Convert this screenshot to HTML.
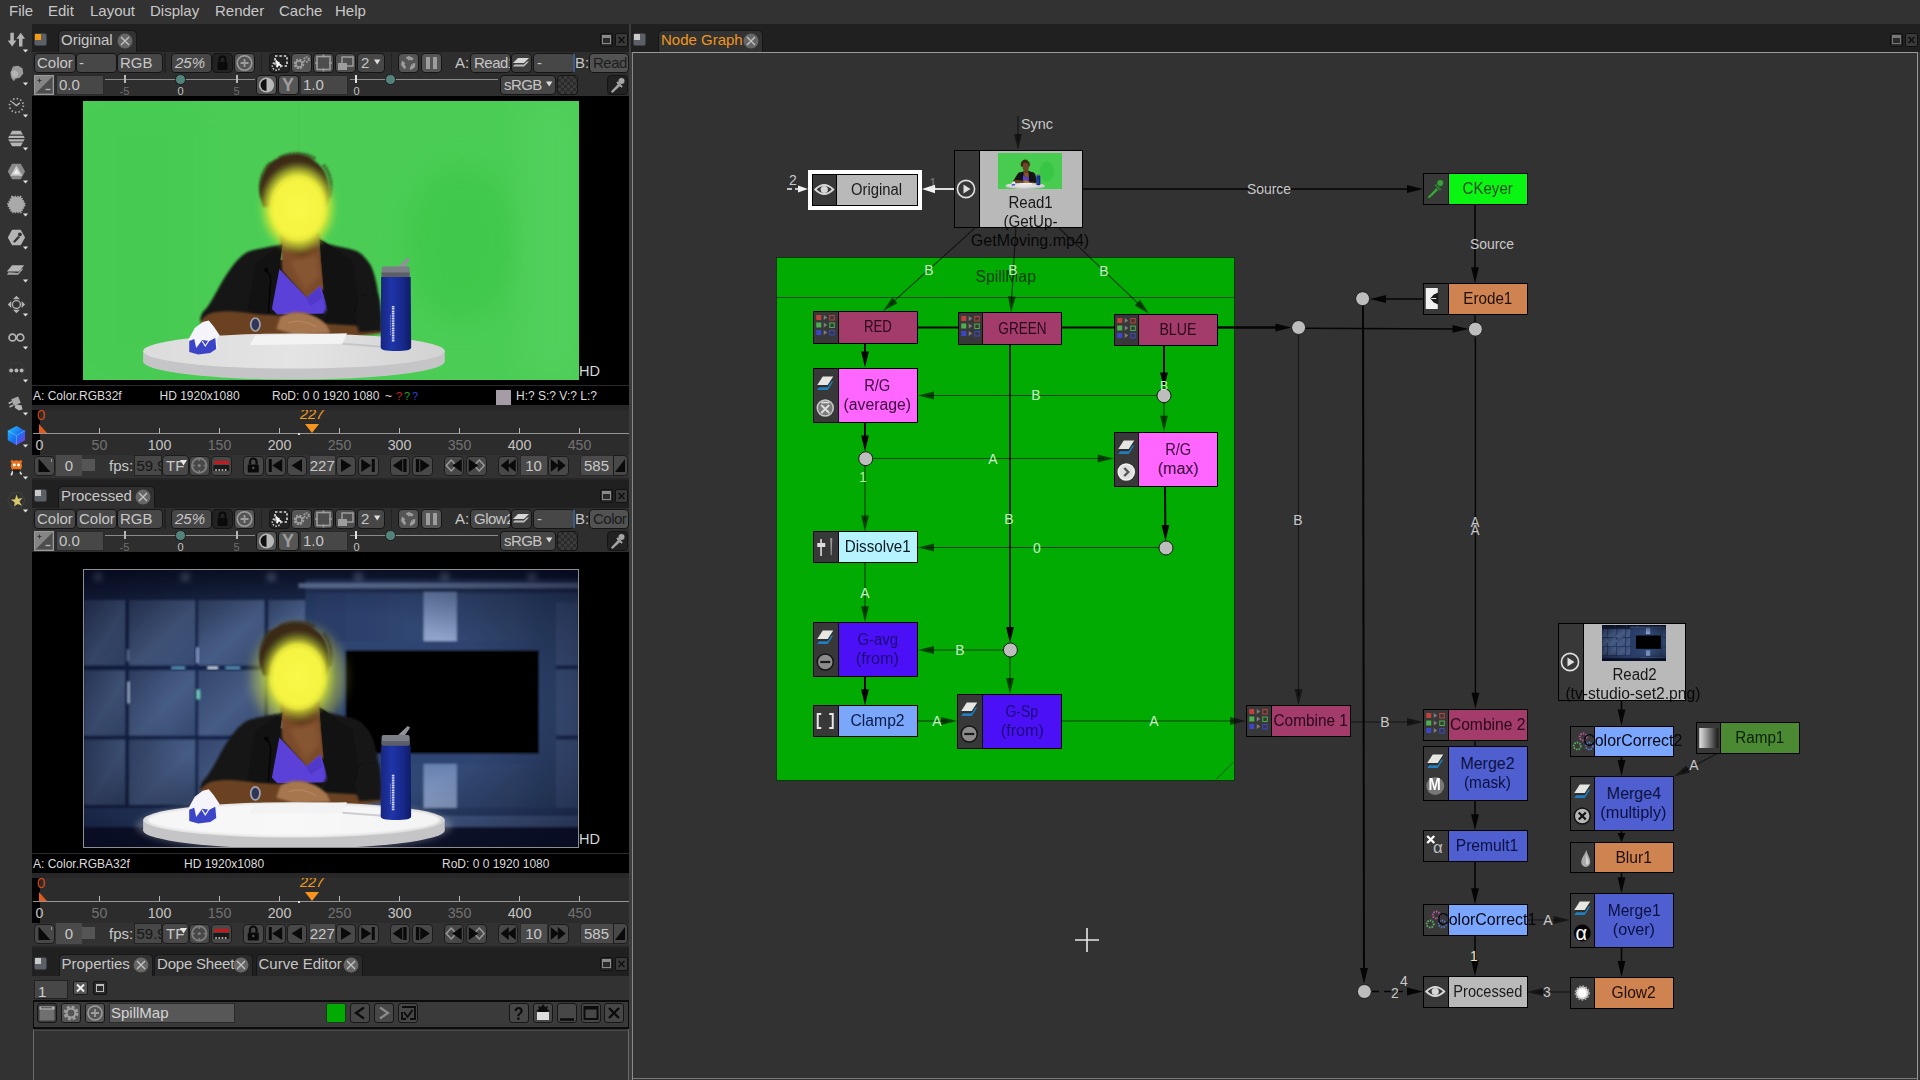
<!DOCTYPE html>
<html><head><meta charset="utf-8"><title>Natron</title>
<style>
*{box-sizing:border-box;margin:0;padding:0}
html,body{width:1920px;height:1080px;overflow:hidden;background:#323232}
body{font-family:"Liberation Sans",sans-serif;font-size:15px;color:#c8c8c8;position:relative;line-height:1}
div,svg,span.a{position:absolute}
.t{white-space:nowrap;line-height:1}
.btn{background:#474747;border:1px solid #151515;border-radius:4px}
.btnd{background:#222;border:1px solid #151515;border-radius:4px}
.spin{background:#474747;border:1px solid #2a2a2a;border-radius:1px}
.nd{border:1px solid #000}
.nt{white-space:nowrap;text-align:center;color:rgba(0,0,0,.86);font-size:15px;line-height:19px}
.lb{white-space:nowrap;color:#c9c9c9;font-size:14px;line-height:1;transform:translate(-50%,-50%)}
</style></head>
<body>
<div style="left:0px;top:0px;width:1920px;height:24px;background:#323232"></div><div class="t" style="left:9px;top:3px;font-size:15px;color:#c8c8c8">File</div><div class="t" style="left:48px;top:3px;font-size:15px;color:#c8c8c8">Edit</div><div class="t" style="left:90px;top:3px;font-size:15px;color:#c8c8c8">Layout</div><div class="t" style="left:150px;top:3px;font-size:15px;color:#c8c8c8">Display</div><div class="t" style="left:215px;top:3px;font-size:15px;color:#c8c8c8">Render</div><div class="t" style="left:279px;top:3px;font-size:15px;color:#c8c8c8">Cache</div><div class="t" style="left:335px;top:3px;font-size:15px;color:#c8c8c8">Help</div><div style="left:0px;top:24px;width:32px;height:1056px;background:#323232"></div><svg style="left:5.5px;top:30.5px;" width="24.3" height="22.5" viewBox="0 0 28 26"><path d="M5 2v9h-3l5 7 5-7h-3v-9z" fill="#b4b4b4"/><path d="M15 18v-9h-3l5-7 5 7h-3v9z" fill="#b4b4b4"/><path d="M19.5 21.5h6l-3 3.2z" fill="#ddd"/></svg><svg style="left:5.5px;top:63.5px;" width="24.3" height="22.5" viewBox="0 0 28 26"><path d="M8 3l6-1 5 3 1 6-4 5-5 1-2 3-3-4-1-6z" fill="#9a9a9a"/><path d="M6 9l4-2 4 3-1 5-5 1z" fill="#b4b4b4"/><path d="M19.5 21.5h6l-3 3.2z" fill="#ddd"/></svg><svg style="left:5.5px;top:95.5px;" width="24.3" height="22.5" viewBox="0 0 28 26"><circle cx="12" cy="11" r="8" fill="none" stroke="#b4b4b4" stroke-width="2" stroke-dasharray="1.6 2.6"/><path d="M7 7l5 4 4-3" fill="none" stroke="#b4b4b4" stroke-width="1.6"/><path d="M19.5 21.5h6l-3 3.2z" fill="#ddd"/></svg><svg style="left:5.5px;top:128.5px;" width="24.3" height="22.5" viewBox="0 0 28 26"><path d="M7 2h10l5 9-5 9h-10l-5-9z" fill="#b4b4b4"/><path d="M2 7h20M2 11h20M2 15h20" stroke="#323232" stroke-width="1.4"/><path d="M19.5 21.5h6l-3 3.2z" fill="#ddd"/></svg><svg style="left:5.5px;top:161.5px;" width="24.3" height="22.5" viewBox="0 0 28 26"><path d="M7 2h10l5 9-5 9h-10l-5-9z" fill="#8a8a8a"/><path d="M12 4l7 12h-14z" fill="#c9c9c9"/><path d="M12 8l3.5 6h-7z" fill="#eee"/><path d="M19.5 21.5h6l-3 3.2z" fill="#ddd"/></svg><svg style="left:5.5px;top:194.5px;" width="24.3" height="22.5" viewBox="0 0 28 26"><path d="M7 2h10l5 9-5 9h-10l-5-9z" fill="#a9a9a9" stroke="#a9a9a9" stroke-width="2.4" stroke-dasharray="1.5 1.5"/><path d="M19.5 21.5h6l-3 3.2z" fill="#ddd"/></svg><svg style="left:5.5px;top:227.5px;" width="24.3" height="22.5" viewBox="0 0 28 26"><path d="M7 2h10l5 9-5 9h-10l-5-9z" fill="#b4b4b4"/><path d="M8 16l6-7 2 2-6 6z" fill="#323232"/><circle cx="16" cy="7.5" r="2.2" fill="#323232"/><path d="M19.5 21.5h6l-3 3.2z" fill="#ddd"/></svg><svg style="left:5.5px;top:260.5px;" width="24.3" height="22.5" viewBox="0 0 28 26"><path d="M7 5h14l-6 7h-14z" fill="#b4b4b4"/><path d="M3 13l-2 3h13l6-7h-2l-4 5z" fill="#a5a5a5"/><path d="M19.5 21.5h6l-3 3.2z" fill="#ddd"/></svg><svg style="left:5.5px;top:294.5px;" width="24.3" height="22.5" viewBox="0 0 28 26"><circle cx="12" cy="11" r="4.6" fill="none" stroke="#b4b4b4" stroke-width="1.5"/><path d="M12 1l4 4h-8zM12 21l4-4h-8zM2 11l4-4v8zM22 11l-4-4v8z" fill="#b4b4b4"/><path d="M19.5 21.5h6l-3 3.2z" fill="#ddd"/></svg><svg style="left:5.5px;top:327.5px;" width="24.3" height="22.5" viewBox="0 0 28 26"><circle cx="7.5" cy="11" r="4" fill="none" stroke="#b4b4b4" stroke-width="2"/><circle cx="16.5" cy="11" r="4" fill="none" stroke="#b4b4b4" stroke-width="2"/><path d="M19.5 21.5h6l-3 3.2z" fill="#ddd"/></svg><svg style="left:5.5px;top:360.5px;" width="24.3" height="22.5" viewBox="0 0 28 26"><path d="M7 2h10l5 9-5 9h-10l-5-9z" fill="none" stroke="#3d3d3d" stroke-width="1"/><circle cx="6" cy="11" r="2.3" fill="#b4b4b4"/><circle cx="12" cy="11" r="2.3" fill="#b4b4b4"/><circle cx="18" cy="11" r="2.3" fill="#b4b4b4"/><path d="M19.5 21.5h6l-3 3.2z" fill="#ddd"/></svg><svg style="left:5.5px;top:393.5px;" width="24.3" height="22.5" viewBox="0 0 28 26"><path d="M6 6l8-3 3 7-8 4z" fill="#a8a8a8"/><path d="M11 12l7 1 1 5-4 1-5-3z" fill="#b4b4b4"/><path d="M3 11l4-2M4 15l4-2" stroke="#b4b4b4" stroke-width="1.8"/><path d="M19.5 21.5h6l-3 3.2z" fill="#ddd"/></svg><svg style="left:5.5px;top:425.5px;" width="24.3" height="22.5" viewBox="0 0 28 26"><defs><linearGradient id="cb" x1="0" y1="0" x2="1" y2="1"><stop offset="0" stop-color="#21c6ff"/><stop offset=".55" stop-color="#1b6cf0"/><stop offset="1" stop-color="#8a35e8"/></linearGradient></defs><path d="M12 0l10 5.5v11l-10 5.5-10-5.5v-11z" fill="url(#cb)"/><path d="M12 11l10-5.5M12 11v11M12 11l-10-5.5" stroke="#7fd8ff" stroke-width=".8" opacity=".7"/><path d="M19.5 21.5h6l-3 3.2z" fill="#ddd"/></svg><svg style="left:5.5px;top:457.5px;" width="24.3" height="22.5" viewBox="0 0 28 26"><circle cx="12" cy="9" r="6.5" fill="#e8731c"/><path d="M6 3l3 3M18 3l-3 3" stroke="#e8731c" stroke-width="3"/><circle cx="9.5" cy="8" r="1.7" fill="#fff"/><circle cx="14.5" cy="8" r="1.7" fill="#fff"/><path d="M8 15l-2 5M15 15l3 4" stroke="#ddd" stroke-width="2"/><rect x="8" y="13" width="8" height="4" fill="#222"/><path d="M19.5 21.5h6l-3 3.2z" fill="#ddd"/></svg><svg style="left:5.5px;top:490.5px;" width="24.3" height="22.5" viewBox="0 0 28 26"><path d="M7 2h10l5 9-5 9h-10l-5-9z" fill="none" stroke="#444" stroke-width="1"/><path d="M12 4l2 5 5-1-3.5 4 3 5-5-2-4 3 .5-5-4.5-3 5-.5z" fill="#d8c86a"/><path d="M19.5 21.5h6l-3 3.2z" fill="#ddd"/></svg><div style="left:32px;top:24px;width:598px;height:1056px;background:#323232"></div><div style="left:32px;top:24px;width:598px;height:28px;background:#202020"></div><svg style="left:34px;top:33px;" width="14" height="14" viewBox="0 0 14 14"><rect x="0" y="0" width="13" height="13" rx="2" fill="#5b6066" stroke="#222" stroke-width="1"/><rect x="1" y="1" width="6" height="6" fill="#f79a10"/></svg><div style="left:58px;top:30px;width:78.5px;height:22px;background:#323232;border:1px solid #161616;border-bottom:none;border-radius:5px 5px 0 0"></div><div class="t" style="left:61px;top:32px;font-size:15px;color:#c8c8c8">Original</div><svg style="left:116.5px;top:33px;" width="16" height="16" viewBox="0 0 16 16"><circle cx="8" cy="8" r="7.5" fill="#666"/><path d="M4 4l8 8M12 4l-8 8" stroke="#c4c4c4" stroke-width="1.25"/></svg><div style="left:600px;top:33px;width:13px;height:14px;background:#2a2a2a;border:1px solid #111;border-radius:2px"><div style="left:1px;top:1px;width:9px;height:9px;border:1.5px solid #8a8a8a;border-top-width:3px"></div></div><div style="left:615px;top:33px;width:13px;height:14px;background:#3a3a3a;border:1px solid #111;border-radius:2px"></div><svg style="left:615px;top:33px;" width="13" height="14" viewBox="0 0 13 14"><path d="M3.5 4l6 6M9.5 4l-6 6" stroke="#111" stroke-width="1.7"/></svg><div style="left:32px;top:52px;width:598px;height:44px;background:#2e2e2e"></div><div class="btn" style="left:34px;top:53px;width:42px;height:20px;"></div><div class="t" style="left:37px;top:55px;font-size:15px;color:#c6c6c6">Color</div><div class="btn" style="left:76px;top:53px;width:41px;height:20px;"></div><div class="t" style="left:79px;top:55px;font-size:15px;color:#c6c6c6">-</div><div class="btn" style="left:117px;top:53px;width:46px;height:20px;"></div><div class="t" style="left:120px;top:55px;font-size:15px;color:#c6c6c6">RGB</div><div style="left:164px;top:53px;width:2px;height:20px;background:#222"></div><div class="btn" style="left:171px;top:53px;width:41px;height:20px;"></div><div class="t" style="left:175px;top:55px;font-size:15px;color:#c6c6c6;font-style:italic">25%</div><div class="btnd" style="left:212px;top:53px;width:21px;height:20px;"></div><svg style="left:212px;top:53px;" width="20" height="20" viewBox="0 0 20 20"><rect x="5.5" y="9" width="10" height="8" rx="1" fill="#0a0a0a"/><path d="M7.5 9v-2.5a3 3 0 0 1 6 0v2.5" fill="none" stroke="#0a0a0a" stroke-width="2"/></svg><div class="btn" style="left:234px;top:53px;width:21px;height:20px;background:#555"></div><svg style="left:234px;top:53px;" width="20" height="20" viewBox="0 0 20 20"><circle cx="10.5" cy="10" r="7.3" fill="none" stroke="#9d9d9d" stroke-width="1.6"/><path d="M6.5 10h8M10.5 6v8" stroke="#9d9d9d" stroke-width="1.8"/></svg><div style="left:261px;top:53px;width:1px;height:20px;background:#222"></div><div class="btnd" style="left:269px;top:53px;width:21px;height:20px;"></div><svg style="left:269px;top:53px;" width="20" height="20" viewBox="0 0 20 20"><rect x="6" y="3" width="12" height="10" fill="none" stroke="#ddd" stroke-width="1.6" stroke-dasharray="2.4 2"/><circle cx="7.5" cy="13" r="4.2" fill="none" stroke="#ccc" stroke-width="1.4" stroke-dasharray="1.6 1.4"/><path d="M6.5 6l6 6.5-3 .3-1.5 2.5z" fill="#fff"/></svg><div class="btn" style="left:291px;top:53px;width:21px;height:20px;background:#555"></div><svg style="left:291px;top:53px;" width="20" height="20" viewBox="0 0 20 20"><circle cx="8" cy="11" r="4" fill="none" stroke="#9d9d9d" stroke-width="2.6" stroke-dasharray="2 1.1"/><circle cx="8" cy="11" r="3" fill="none" stroke="#9d9d9d" stroke-width="1.4"/><circle cx="15.5" cy="6.5" r="2.3" fill="none" stroke="#9d9d9d" stroke-width="2" stroke-dasharray="1.4 .9"/></svg><div class="btn" style="left:313px;top:53px;width:21px;height:20px;background:#4d4d4d"></div><svg style="left:313px;top:53px;" width="20" height="20" viewBox="0 0 20 20"><rect x="4" y="3.5" width="13" height="13" fill="none" stroke="#9d9d9d" stroke-width="1.6"/><path d="M10.5 1.5v3M10.5 15.5v3M2 10h3M16 10h3" stroke="#9d9d9d" stroke-width="1.6"/></svg><div class="btn" style="left:335px;top:53px;width:21px;height:20px;background:#4d4d4d"></div><svg style="left:335px;top:53px;" width="20" height="20" viewBox="0 0 20 20"><rect x="7" y="4" width="11" height="9" fill="none" stroke="#9d9d9d" stroke-width="1.5"/><rect x="3" y="10" width="9" height="7" fill="#9d9d9d"/></svg><div class="btn" style="left:357px;top:53px;width:28px;height:20px;"></div><div class="t" style="left:361px;top:55px;font-size:15px;color:#c6c6c6">2</div><svg style="left:372px;top:53px;" width="10" height="20" viewBox="0 0 10 20"><path d="M2 6.5h6.4l-3.2 5z" fill="#dedede"/></svg><div style="left:391px;top:53px;width:1px;height:20px;background:#222"></div><div class="btn" style="left:398px;top:53px;width:21px;height:20px;background:#555"></div><svg style="left:398px;top:53px;" width="20" height="20" viewBox="0 0 20 20"><path d="M10.5 2.5l4 3.5-4.5 1.5zM3 13l1-5.5 3.5 3zM17.5 14l-5.5 1.5 1.5-4.5z" fill="#9d9d9d"/><circle cx="10.5" cy="10.3" r="5.6" fill="none" stroke="#9d9d9d" stroke-width="2.6" stroke-dasharray="7 4.7"/></svg><div class="btn" style="left:421px;top:53px;width:21px;height:20px;background:#555"></div><svg style="left:421px;top:53px;" width="20" height="20" viewBox="0 0 20 20"><rect x="5" y="4" width="4" height="12" fill="#9d9d9d"/><rect x="12" y="4" width="4" height="12" fill="#9d9d9d"/></svg><div class="t" style="left:455px;top:55px;font-size:15px;color:#c6c6c6">A:</div><div class="btn" style="left:470px;top:53px;width:41px;height:20px;"></div><div style="left:471px;top:54px;width:39px;height:18px;overflow:hidden"><div class="t" style="left:3px;top:1px;font-size:15px;color:#c6c6c6;letter-spacing:-.5px">Read1</div></div><div class="btn" style="left:511px;top:53px;width:21px;height:20px;background:#3d3d3d"></div><svg style="left:511px;top:53px;" width="20" height="20" viewBox="0 0 20 20"><path d="M7 5h11l-5 5h-11z" fill="#d6d6d6"/><path d="M3.5 11.5l-1.5 2h11l5-5h-2l-3.2 3z" fill="#bdbdbd"/></svg><div class="btn" style="left:533px;top:53px;width:42px;height:20px;"></div><div class="t" style="left:537px;top:55px;font-size:15px;color:#c6c6c6">-</div><div style="left:573px;top:54px;width:2px;height:18px;background:#3b5a86"></div><div class="t" style="left:575px;top:55px;font-size:15px;color:#c6c6c6">B:</div><div class="btn" style="left:589px;top:53px;width:40px;height:20px;background:#525252"></div><div style="left:590px;top:54px;width:38px;height:18px;overflow:hidden"><div class="t" style="left:3px;top:1px;font-size:15px;color:#1c1c1c;letter-spacing:-.5px">Read1</div></div><div style="left:34px;top:75px;width:20px;height:20px;background:#858585;border:1px solid #9a9a9a"></div><svg style="left:34px;top:75px;" width="20" height="20" viewBox="0 0 20 20"><path d="M1.5 18.5L18.5 1.5v17z" fill="#4d4d4d"/><path d="M3.5 5.5h4M5.5 3.5v4" stroke="#3a3a3a" stroke-width="1.2"/><path d="M11.5 14.5h5" stroke="#b5b5b5" stroke-width="1.4"/></svg><div class="spin" style="left:56px;top:75px;width:48px;height:20px;"></div><div class="t" style="left:59px;top:77px;font-size:15px;color:#c6c6c6">0.0</div><div style="left:105px;top:79px;width:150px;height:1px;background:#8a8a8a"></div><div style="left:124px;top:75px;width:1.5px;height:8px;background:#b5b5b5"></div><div class="t" style="left:114px;top:85.5px;font-size:11px;color:#6e6e6e;width:21px;text-align:center">-5</div><div style="left:180px;top:75px;width:1.5px;height:8px;background:#b5b5b5"></div><div class="t" style="left:170px;top:85.5px;font-size:11px;color:#c4c4c4;width:21px;text-align:center">0</div><div style="left:236px;top:75px;width:1.5px;height:8px;background:#b5b5b5"></div><div class="t" style="left:226px;top:85.5px;font-size:11px;color:#6e6e6e;width:21px;text-align:center">5</div><div style="left:175px;top:74px;width:10.5px;height:10.5px;background:#54817a;border-radius:50%;border:1px solid #16211f"></div><div class="btn" style="left:256px;top:75px;width:21px;height:20px;background:#555"></div><svg style="left:256px;top:75px;" width="20" height="20" viewBox="0 0 20 20"><circle cx="10.5" cy="10" r="7.6" fill="#b9b9b9"/><path d="M10.5 4a6 6 0 0 0 0 12z" fill="#111"/></svg><div class="btn" style="left:278px;top:75px;width:21px;height:20px;background:#555"></div><div class="t" style="left:282px;top:76px;font-size:18px;font-weight:bold;color:#9d9d9d">Y</div><div class="spin" style="left:300px;top:75px;width:48px;height:20px;"></div><div class="t" style="left:303px;top:77px;font-size:15px;color:#c6c6c6">1.0</div><div style="left:350px;top:79px;width:148px;height:1px;background:#8a8a8a"></div><div style="left:355px;top:75px;width:2px;height:8px;background:#e0e0e0"></div><div class="t" style="left:346px;top:85.5px;font-size:11px;color:#c4c4c4;width:21px;text-align:center">0</div><div style="left:385px;top:74px;width:10.5px;height:10.5px;background:#54817a;border-radius:50%;border:1px solid #16211f"></div><div class="btn" style="left:500px;top:75px;width:56px;height:20px;"></div><div class="t" style="left:504px;top:77px;font-size:15px;color:#c6c6c6;letter-spacing:-.6px">sRGB</div><svg style="left:544px;top:75px;" width="10" height="20" viewBox="0 0 10 20"><path d="M2 6.5h6.4l-3.2 5z" fill="#dedede"/></svg><div style="left:557px;top:75px;width:21px;height:20px;border:1px solid #151515;border-radius:4px;background-color:#3c3c3c;background-image:linear-gradient(45deg,#2b2b2b 25%,transparent 25%,transparent 75%,#2b2b2b 75%),linear-gradient(45deg,#2b2b2b 25%,transparent 25%,transparent 75%,#2b2b2b 75%);background-size:6px 6px;background-position:0 0,3px 3px"></div><div class="btnd" style="left:607px;top:75px;width:21px;height:20px;"></div><svg style="left:607px;top:75px;" width="20" height="20" viewBox="0 0 20 20"><path d="M4 16.5l7-7.5 2 2-7.5 7z" fill="#a6a6a6"/><path d="M10 7l5 5" stroke="#a6a6a6" stroke-width="2"/><circle cx="14.5" cy="6" r="3" fill="#a6a6a6"/></svg><div style="left:32px;top:96px;width:598px;height:290px;background:#000"></div><svg preserveAspectRatio="none" style="left:83px;top:101px;" width="496" height="279" viewBox="0 0 495 279">
<defs>
<filter id="b1" x="-20%" y="-20%" width="140%" height="140%"><feGaussianBlur stdDeviation="1"/></filter>
<filter id="b2" x="-30%" y="-30%" width="160%" height="160%"><feGaussianBlur stdDeviation="2.2"/></filter>
<filter id="b5" x="-40%" y="-40%" width="180%" height="180%"><feGaussianBlur stdDeviation="5"/></filter>
<filter id="b12" x="-50%" y="-50%" width="200%" height="200%"><feGaussianBlur stdDeviation="14"/></filter>
<radialGradient id="yel" cx=".5" cy=".5" r=".5"><stop offset="0" stop-color="#f9f748"/><stop offset=".58" stop-color="#f6f442"/><stop offset=".68" stop-color="#eef03c" stop-opacity=".92"/><stop offset=".8" stop-color="#d4e636" stop-opacity=".5"/><stop offset=".92" stop-color="#b4de3a" stop-opacity=".15"/><stop offset="1" stop-color="#a0d840" stop-opacity="0"/></radialGradient>
<linearGradient id="tab" x1="0" y1="0" x2="1" y2="0"><stop offset="0" stop-color="#dcdcdc"/><stop offset=".5" stop-color="#e4e4e4"/><stop offset="1" stop-color="#d2d2d2"/></linearGradient>
<linearGradient id="bot" x1="0" y1="0" x2="1" y2="0"><stop offset="0" stop-color="#17267f"/><stop offset=".35" stop-color="#1f34a8"/><stop offset=".7" stop-color="#182a8e"/><stop offset="1" stop-color="#101c66"/></linearGradient>
<g id="pbody">
  <!-- hair -->
  <path d="M178 100c-3-10-2-20 3-29 3-7 8-12 14-14 5-3 12-4 18-4 7 0 13 2 18 7 6 4 10 9 12 16 3 8 3 17 2 24l-3 6h-62z" fill="#3a2b16" filter="url(#b1)"/>
  <path d="M179 96c-4-12-1-26 8-34M246 96c3-12 1-24-6-32M196 57c10-6 26-6 36 1" stroke="#3a2b16" stroke-width="3" fill="none" stroke-dasharray="2 1.5" filter="url(#b1)"/>
  <path d="M186 160l60-6 10 70-74 4z" fill="#151515"/>
  <!-- neck + chest skin -->
  <path d="M197 132h39l1 12 6 42-18 14-26-30-2-26z" fill="#7a4c2b" filter="url(#b1)"/>
  <path d="M206 160l16 30 14-16-3-20z" fill="#8c5a36" opacity=".7" filter="url(#b2)"/>
  <path d="M204 150l14 6 16-8-2-12h-26z" fill="#593619" opacity=".7" filter="url(#b2)"/>
  <!-- shirt -->
  <path d="M194 166l29 30.5 14-12 9 28-52 1-8-8z" fill="#5b41d8"/>
  <path d="M223 197l13-10 3 10-12 8z" fill="#4a32c0" opacity=".6"/>
  <!-- cardigan -->
  <path d="M199 143c-12 3-24 4.5-32.5 7-7 3-12 8-16.5 14-7 9-12 18-16 25.5-5 9-10 18-14 21-2 3-3 6-3 9l20 6 50-14 5-44z" fill="#171717" filter="url(#b1)"/>
  <path d="M236 137.5c4 3 7 4.5 9 5.5 10 3 20 4 28 7 6 3 10 8 14 14 5 10 7 24 9 37 1 8 1.5 16 1 23l-14 8-48-10 8-14-4-38z" fill="#171717" filter="url(#b1)"/>
  <path d="M199 143l-3 25-8 42 4 8-30 4 10-60z" fill="#121212"/>
  <path d="M236 138l4 48 5 26-6 8 40 6-10-66z" fill="#121212"/>
  <!-- mic -->
  <path d="M183 170c4 3 5 8 4 14l-2 28" stroke="#050505" stroke-width="1.5" fill="none"/>
  <circle cx="183" cy="169" r="2.2" fill="#050505"/>
  <!-- arms -->
  <path d="M117 222c2-6 8-10 16-11 12-2 26 0 40 2l30 2c6-3 14-4 20-2l14 6 4 4 40 2 16-1 2 8-40 6h-90l-50-4z" fill="#6a4224" filter="url(#b1)"/>
  <path d="M197 216c6-4 16-6 24-4 8 2 16 6 22 12l4 8-34 2-20-6z" fill="#a67650" filter="url(#b1)"/>
  <path d="M276 196l18-2c2 10 3.5 22 3.5 36l-22 1.5c-4-10-4-24 .5-35.5z" fill="#171717" filter="url(#b1)"/>
  <path d="M205 222c8-3 18-2 28 4" stroke="#b88660" stroke-width="1.5" fill="none" opacity=".8"/>
  <!-- watch -->
  <ellipse cx="172" cy="223.5" rx="4.6" ry="6.5" fill="#2f3658" stroke="#a2a3b0" stroke-width="1.7"/>
</g>
<g id="ptable">
  <ellipse cx="210.5" cy="260.5" rx="150.5" ry="18" fill="#c5c5c8"/>
  <rect x="60" y="250" width="301" height="10.5" fill="#c5c5c8"/>
  <ellipse cx="210.5" cy="250" rx="150.5" ry="17.6" fill="url(#tab)"/>
</g>
<g id="pobj">
  <path d="M172 234.5l91.5-2.2-4.5 10.5-92.5 1.2z" fill="#f3f3f3"/>
  <path d="M259 242.8l40 3" stroke="#bdbdc2" stroke-width="2" opacity=".7"/>
  <!-- bottle -->
  <path d="M314 166l10-9.5 2.5 1.5-6 9z" fill="#8f9299"/>
  <rect x="298" y="165.5" width="28" height="10.5" rx="2" fill="#7b7e86"/>
  <rect x="298" y="171.5" width="28" height="4.5" fill="#5c5f68"/>
  <path d="M297.5 176h29.5l.5 70.5c0 2.5-5 3.5-15.2 3.5s-15.2-1-15.2-3.5z" fill="url(#bot)"/>
  <path d="M309.5 205v36" stroke="#e6e9fa" stroke-width="2.6" stroke-dasharray="1.2 .5" opacity=".9"/>
  <path d="M306.8 214v20" stroke="#e6e9fa" stroke-width=".8" stroke-dasharray=".8 .8" opacity=".7"/>
  <!-- toy -->
  <path d="M106 251l-.5-13 6-11 8-6 6-1.5 5 6 6 9-3 4 1 9-6 4-12 1.5z" fill="#f4f4fa"/>
  <path d="M106 251l0-11 5-2 2 9 6-8 7 1 6-3 1 11-6 4-12 1.5z" fill="#3b44c6"/>
  <path d="M119 240l3 5 4-6" stroke="#f4f4fa" stroke-width="1.2" fill="none"/>
</g>
</defs>
<rect width="495" height="279" fill="#4bcd55"/>
<ellipse cx="378" cy="142" rx="55" ry="78" fill="#38c644" filter="url(#b12)" opacity=".6"/>
<rect x="0" y="0" width="120" height="279" fill="#45c94f" filter="url(#b12)" opacity=".55"/><rect x="440" y="0" width="55" height="279" fill="#55d160" filter="url(#b12)" opacity=".7"/>
<rect x="215" y="0" width="1" height="55" fill="#3faf4c" opacity=".3"/>
<use href="#pbody"/><use href="#ptable"/><use href="#pobj"/>
<ellipse cx="214.5" cy="107" rx="35" ry="41" fill="#dcec3c" opacity=".4" filter="url(#b5)"/>
<ellipse cx="214.5" cy="107" rx="40" ry="47" fill="url(#yel)"/>
</svg><div class="t" style="left:579px;top:364px;font-size:14.5px;color:#d6d6d6">HD</div><div style="left:32px;top:386px;width:598px;height:19px;background:#000"></div><div style="left:32px;top:385px;width:598px;height:1px;background:#2b2b2b"></div><div class="t" style="left:33px;top:390px;font-size:12px;color:#dcdcdc;">A: Color.RGB32f</div><div class="t" style="left:159.5px;top:390px;font-size:12px;color:#dcdcdc;">HD 1920x1080</div><div class="t" style="left:272px;top:390px;font-size:12px;color:#dcdcdc;">RoD: 0 0 1920 1080</div><div class="t" style="left:385px;top:390px;font-size:12px;color:#dcdcdc;">~</div><div class="t" style="left:396px;top:390px;font-size:12px;color:#dcdcdc;color:#c82020;font-size:11px;top:391px">?</div><div class="t" style="left:404px;top:390px;font-size:12px;color:#dcdcdc;color:#20a020;font-size:11px;top:391px">?</div><div class="t" style="left:412px;top:390px;font-size:12px;color:#dcdcdc;color:#3040d0;font-size:11px;top:391px">?</div><div class="t" style="left:516px;top:390px;font-size:12px;color:#dcdcdc;">H:? S:? V:? L:?</div><div style="left:496px;top:390px;width:15px;height:15px;background:#a59ca8"></div><div style="left:32px;top:405px;width:598px;height:50px;background:#2c2c2c"></div><div style="left:32px;top:410px;width:7.5px;height:45px;background:#000"></div><div style="left:33px;top:433px;width:596px;height:1px;background:#959595"></div><div style="left:39.0px;top:428px;width:1.2px;height:5px;background:#b5b5b5"></div><div class="t" style="left:14.5px;top:438px;font-size:14.2px;color:#c4c4c4;width:50px;text-align:center">0</div><div style="left:99.0px;top:428px;width:1.2px;height:5px;background:#b5b5b5"></div><div class="t" style="left:74.5px;top:438px;font-size:14.2px;color:#727272;width:50px;text-align:center">50</div><div style="left:159.0px;top:428px;width:1.2px;height:5px;background:#b5b5b5"></div><div class="t" style="left:134.5px;top:438px;font-size:14.2px;color:#c4c4c4;width:50px;text-align:center">100</div><div style="left:219.0px;top:428px;width:1.2px;height:5px;background:#b5b5b5"></div><div class="t" style="left:194.5px;top:438px;font-size:14.2px;color:#727272;width:50px;text-align:center">150</div><div style="left:279.0px;top:428px;width:1.2px;height:5px;background:#b5b5b5"></div><div class="t" style="left:254.5px;top:438px;font-size:14.2px;color:#c4c4c4;width:50px;text-align:center">200</div><div style="left:339.0px;top:428px;width:1.2px;height:5px;background:#b5b5b5"></div><div class="t" style="left:314.5px;top:438px;font-size:14.2px;color:#727272;width:50px;text-align:center">250</div><div style="left:399.0px;top:428px;width:1.2px;height:5px;background:#b5b5b5"></div><div class="t" style="left:374.5px;top:438px;font-size:14.2px;color:#c4c4c4;width:50px;text-align:center">300</div><div style="left:459.0px;top:428px;width:1.2px;height:5px;background:#b5b5b5"></div><div class="t" style="left:434.5px;top:438px;font-size:14.2px;color:#727272;width:50px;text-align:center">350</div><div style="left:519.0px;top:428px;width:1.2px;height:5px;background:#b5b5b5"></div><div class="t" style="left:494.5px;top:438px;font-size:14.2px;color:#c4c4c4;width:50px;text-align:center">400</div><div style="left:579.0px;top:428px;width:1.2px;height:5px;background:#b5b5b5"></div><div class="t" style="left:554.5px;top:438px;font-size:14.2px;color:#727272;width:50px;text-align:center">450</div><div class="t" style="left:37px;top:406.5px;font-size:15px;color:#d24a16">0</div><svg style="left:39px;top:424px;" width="9" height="9" viewBox="0 0 9 9"><path d="M0 0v9h8z" fill="#e5591a"/></svg><div class="t" style="left:297px;top:406.5px;font-size:14.5px;color:#f59b1e;font-style:italic;width:30px;text-align:center">227</div><svg style="left:305px;top:424px;" width="14" height="9" viewBox="0 0 14 9"><path d="M0 0h14l-7 9z" fill="#f7941d"/></svg><div style="left:298px;top:433px;width:2px;height:2px;background:#ddd"></div><div style="left:32px;top:405px;width:598px;height:5px;background:#272727"></div><div style="left:33.5px;top:455.5px;width:21px;height:20.5px;background:#484848;border:1px solid #1c1c1c;border-radius:4px"></div><svg style="left:33.5px;top:455px;" width="21" height="21" viewBox="0 0 20 21"><path d="M4 3.5L16 17H4z" fill="#0a0a0a"/><path d="M17 4v3" stroke="#999" stroke-width="1"/></svg><div style="left:56px;top:455px;width:26px;height:21px;background:#4a4a4a"></div><div class="t" style="left:56px;top:458px;font-size:15px;color:#c8c8c8;width:26px;text-align:center">0</div><div style="left:82px;top:459px;width:13px;height:12px;background:#555"></div><div class="t" style="left:109px;top:458px;font-size:15px;color:#c8c8c8">fps:</div><div style="left:133.5px;top:455px;width:28.5px;height:21px;background:#484848;border:1px solid #222;overflow:hidden"><div class="t" style="left:2px;top:2px;font-size:15px;color:#161616">59.9</div></div><div style="left:162px;top:455px;width:26.5px;height:21px;background:#484848;border:1px solid #1c1c1c;border-radius:4px;overflow:hidden"><div class="t" style="left:3px;top:2px;font-size:15px;color:#c8c8c8">TF</div></div><svg style="left:179px;top:455px;" width="10" height="21" viewBox="0 0 10 21"><path d="M1 5h7l-3.5 5.5z" fill="#e6e6e6"/></svg><div style="left:189px;top:455.5px;width:20.5px;height:20.5px;background:#484848;border:1px solid #1c1c1c;border-radius:4px"></div><svg style="left:189px;top:455px;" width="20.5" height="21" viewBox="0 0 20 21"><circle cx="10" cy="10.5" r="7.2" fill="none" stroke="#7d7d7d" stroke-width="2"/><circle cx="10" cy="10.5" r="1.6" fill="#7d7d7d"/><path d="M10 3v3M10 15v3M2.5 10.5h3M14.5 10.5h3" stroke="#7d7d7d" stroke-width="1.4"/></svg><div style="left:211px;top:455.5px;width:20.5px;height:20.5px;background:#484848;border:1px solid #1c1c1c;border-radius:4px"></div><svg style="left:211px;top:455px;" width="20.5" height="21" viewBox="0 0 20 21"><path d="M3 6h12v3h-12z" fill="#c8181c"/><path d="M15 4.5l3.5 3-3.5 3z" fill="#c8181c"/><path d="M2 10h16v6h-16z" fill="#1a1a1a"/><path d="M4 15h12" stroke="#ddd" stroke-width="1.6" stroke-dasharray="1.6 1.6"/></svg><div style="left:243px;top:455.5px;width:20.5px;height:20.5px;background:#484848;border:1px solid #1c1c1c;border-radius:4px"></div><svg style="left:243px;top:455px;" width="20.5" height="21" viewBox="0 0 20 21"><rect x="4.5" y="9.5" width="11" height="8" rx="1" fill="#0a0a0a"/><path d="M6.7 9.5v-2.7a3.3 3.3 0 0 1 6.6 0v2.7" fill="none" stroke="#0a0a0a" stroke-width="2.2"/><circle cx="10" cy="13" r="1.2" fill="#555"/></svg><div style="left:265px;top:455.5px;width:20.5px;height:20.5px;background:#484848;border:1px solid #1c1c1c;border-radius:4px"></div><svg style="left:265px;top:455px;" width="20.5" height="21" viewBox="0 0 20 21"><rect x="3.5" y="4" width="3" height="13" fill="#0a0a0a"/><path d="M17 4v13l-10-6.5z" fill="#0a0a0a"/></svg><div style="left:287px;top:455.5px;width:20px;height:20.5px;background:#484848;border:1px solid #1c1c1c;border-radius:4px"></div><svg style="left:287px;top:455px;" width="20" height="21" viewBox="0 0 20 21"><path d="M15 4v13l-10.5-6.5z" fill="#0a0a0a"/></svg><div style="left:308.5px;top:455px;width:27.5px;height:21px;background:#4a4a4a;border:1px solid #2a2a2a"></div><div class="t" style="left:308.5px;top:458px;font-size:15px;color:#c8c8c8;width:27.5px;text-align:center">227</div><div style="left:336px;top:455.5px;width:20px;height:20.5px;background:#484848;border:1px solid #1c1c1c;border-radius:4px"></div><svg style="left:336px;top:455px;" width="20" height="21" viewBox="0 0 20 21"><path d="M5 4v13l10.5-6.5z" fill="#0a0a0a"/></svg><div style="left:358px;top:455.5px;width:20.5px;height:20.5px;background:#484848;border:1px solid #1c1c1c;border-radius:4px"></div><svg style="left:358px;top:455px;" width="20.5" height="21" viewBox="0 0 20 21"><rect x="13.5" y="4" width="3" height="13" fill="#0a0a0a"/><path d="M3 4v13l10-6.5z" fill="#0a0a0a"/></svg><div style="left:389.5px;top:455.5px;width:20.5px;height:20.5px;background:#484848;border:1px solid #1c1c1c;border-radius:4px"></div><svg style="left:389.5px;top:455px;" width="20.5" height="21" viewBox="0 0 20 21"><rect x="13" y="4" width="3.4" height="13" fill="#0a0a0a"/><path d="M12 4v13l-9.5-6.5z" fill="#0a0a0a"/></svg><div style="left:412px;top:455.5px;width:20.5px;height:20.5px;background:#484848;border:1px solid #1c1c1c;border-radius:4px"></div><svg style="left:412px;top:455px;" width="20.5" height="21" viewBox="0 0 20 21"><rect x="3.6" y="4" width="3.4" height="13" fill="#0a0a0a"/><path d="M8 4v13l9.5-6.5z" fill="#0a0a0a"/></svg><div style="left:443.5px;top:455.5px;width:20.5px;height:20.5px;background:#484848;border:1px solid #1c1c1c;border-radius:4px"></div><svg style="left:443.5px;top:455px;" width="20.5" height="21" viewBox="0 0 20 21"><path d="M7 5l-5 5.5 5 5.5 5-5.5z" fill="none" stroke="#9a9a9a" stroke-width="1.5"/><path d="M17.5 4v13l-9.5-6.5z" fill="#0a0a0a"/></svg><div style="left:466px;top:455.5px;width:20.5px;height:20.5px;background:#484848;border:1px solid #1c1c1c;border-radius:4px"></div><svg style="left:466px;top:455px;" width="20.5" height="21" viewBox="0 0 20 21"><path d="M13 5l5 5.5-5 5.5-5-5.5z" fill="none" stroke="#9a9a9a" stroke-width="1.5"/><path d="M2.5 4v13l9.5-6.5z" fill="#0a0a0a"/></svg><div style="left:497.5px;top:455.5px;width:20.5px;height:20.5px;background:#484848;border:1px solid #1c1c1c;border-radius:4px"></div><svg style="left:497.5px;top:455px;" width="20.5" height="21" viewBox="0 0 20 21"><path d="M10.5 4v13l-8-6.5zM17.5 4v13l-8-6.5z" fill="#0a0a0a"/></svg><div style="left:519.5px;top:455px;width:28px;height:21px;background:#4a4a4a;border:1px solid #2a2a2a"></div><div class="t" style="left:519.5px;top:458px;font-size:15px;color:#c8c8c8;width:28px;text-align:center">10</div><div style="left:548px;top:455.5px;width:20.5px;height:20.5px;background:#484848;border:1px solid #1c1c1c;border-radius:4px"></div><svg style="left:548px;top:455px;" width="20.5" height="21" viewBox="0 0 20 21"><path d="M2.5 4v13l8-6.5zM9.5 4v13l8-6.5z" fill="#0a0a0a"/></svg><div style="left:579.5px;top:455px;width:34px;height:21px;background:#4a4a4a;border:1px solid #2a2a2a;border-radius:3px 0 0 3px"></div><div class="t" style="left:579.5px;top:458px;font-size:15px;color:#c8c8c8;width:34px;text-align:center">585</div><div style="left:613px;top:455px;width:14.5px;height:21px;background:#484848;border:1px solid #1c1c1c;border-radius:0 4px 4px 0"></div><svg style="left:613px;top:455px;" width="14" height="21" viewBox="0 0 14 21"><path d="M12 4v13h-10z" fill="#0a0a0a"/></svg><div style="left:32px;top:478px;width:598px;height:2px;background:#262626"></div><div style="left:32px;top:480px;width:598px;height:28px;background:#202020"></div><svg style="left:34px;top:489px;" width="14" height="14" viewBox="0 0 14 14"><rect x="0" y="0" width="13" height="13" rx="2" fill="#5b6066" stroke="#222" stroke-width="1"/><rect x="1" y="1" width="6" height="6" fill="#c9c9c9"/></svg><div style="left:58px;top:486px;width:96.5px;height:22px;background:#323232;border:1px solid #161616;border-bottom:none;border-radius:5px 5px 0 0"></div><div class="t" style="left:61px;top:488px;font-size:15px;color:#c8c8c8">Processed</div><svg style="left:134.5px;top:489px;" width="16" height="16" viewBox="0 0 16 16"><circle cx="8" cy="8" r="7.5" fill="#666"/><path d="M4 4l8 8M12 4l-8 8" stroke="#c4c4c4" stroke-width="1.25"/></svg><div style="left:600px;top:489px;width:13px;height:14px;background:#2a2a2a;border:1px solid #111;border-radius:2px"><div style="left:1px;top:1px;width:9px;height:9px;border:1.5px solid #8a8a8a;border-top-width:3px"></div></div><div style="left:615px;top:489px;width:13px;height:14px;background:#3a3a3a;border:1px solid #111;border-radius:2px"></div><svg style="left:615px;top:489px;" width="13" height="14" viewBox="0 0 13 14"><path d="M3.5 4l6 6M9.5 4l-6 6" stroke="#111" stroke-width="1.7"/></svg><div style="left:32px;top:508px;width:598px;height:44px;background:#2e2e2e"></div><div class="btn" style="left:34px;top:509px;width:42px;height:20px;"></div><div class="t" style="left:37px;top:511px;font-size:15px;color:#c6c6c6">Color</div><div class="btn" style="left:76px;top:509px;width:41px;height:20px;"></div><div class="t" style="left:79px;top:511px;font-size:15px;color:#c6c6c6">Color</div><div class="btn" style="left:117px;top:509px;width:46px;height:20px;"></div><div class="t" style="left:120px;top:511px;font-size:15px;color:#c6c6c6">RGB</div><div style="left:164px;top:509px;width:2px;height:20px;background:#222"></div><div class="btn" style="left:171px;top:509px;width:41px;height:20px;"></div><div class="t" style="left:175px;top:511px;font-size:15px;color:#c6c6c6;font-style:italic">25%</div><div class="btnd" style="left:212px;top:509px;width:21px;height:20px;"></div><svg style="left:212px;top:509px;" width="20" height="20" viewBox="0 0 20 20"><rect x="5.5" y="9" width="10" height="8" rx="1" fill="#0a0a0a"/><path d="M7.5 9v-2.5a3 3 0 0 1 6 0v2.5" fill="none" stroke="#0a0a0a" stroke-width="2"/></svg><div class="btn" style="left:234px;top:509px;width:21px;height:20px;background:#555"></div><svg style="left:234px;top:509px;" width="20" height="20" viewBox="0 0 20 20"><circle cx="10.5" cy="10" r="7.3" fill="none" stroke="#9d9d9d" stroke-width="1.6"/><path d="M6.5 10h8M10.5 6v8" stroke="#9d9d9d" stroke-width="1.8"/></svg><div style="left:261px;top:509px;width:1px;height:20px;background:#222"></div><div class="btnd" style="left:269px;top:509px;width:21px;height:20px;"></div><svg style="left:269px;top:509px;" width="20" height="20" viewBox="0 0 20 20"><rect x="6" y="3" width="12" height="10" fill="none" stroke="#ddd" stroke-width="1.6" stroke-dasharray="2.4 2"/><circle cx="7.5" cy="13" r="4.2" fill="none" stroke="#ccc" stroke-width="1.4" stroke-dasharray="1.6 1.4"/><path d="M6.5 6l6 6.5-3 .3-1.5 2.5z" fill="#fff"/></svg><div class="btn" style="left:291px;top:509px;width:21px;height:20px;background:#555"></div><svg style="left:291px;top:509px;" width="20" height="20" viewBox="0 0 20 20"><circle cx="8" cy="11" r="4" fill="none" stroke="#9d9d9d" stroke-width="2.6" stroke-dasharray="2 1.1"/><circle cx="8" cy="11" r="3" fill="none" stroke="#9d9d9d" stroke-width="1.4"/><circle cx="15.5" cy="6.5" r="2.3" fill="none" stroke="#9d9d9d" stroke-width="2" stroke-dasharray="1.4 .9"/></svg><div class="btn" style="left:313px;top:509px;width:21px;height:20px;background:#4d4d4d"></div><svg style="left:313px;top:509px;" width="20" height="20" viewBox="0 0 20 20"><rect x="4" y="3.5" width="13" height="13" fill="none" stroke="#9d9d9d" stroke-width="1.6"/><path d="M10.5 1.5v3M10.5 15.5v3M2 10h3M16 10h3" stroke="#9d9d9d" stroke-width="1.6"/></svg><div class="btn" style="left:335px;top:509px;width:21px;height:20px;background:#4d4d4d"></div><svg style="left:335px;top:509px;" width="20" height="20" viewBox="0 0 20 20"><rect x="7" y="4" width="11" height="9" fill="none" stroke="#9d9d9d" stroke-width="1.5"/><rect x="3" y="10" width="9" height="7" fill="#9d9d9d"/></svg><div class="btn" style="left:357px;top:509px;width:28px;height:20px;"></div><div class="t" style="left:361px;top:511px;font-size:15px;color:#c6c6c6">2</div><svg style="left:372px;top:509px;" width="10" height="20" viewBox="0 0 10 20"><path d="M2 6.5h6.4l-3.2 5z" fill="#dedede"/></svg><div style="left:391px;top:509px;width:1px;height:20px;background:#222"></div><div class="btn" style="left:398px;top:509px;width:21px;height:20px;background:#555"></div><svg style="left:398px;top:509px;" width="20" height="20" viewBox="0 0 20 20"><path d="M10.5 2.5l4 3.5-4.5 1.5zM3 13l1-5.5 3.5 3zM17.5 14l-5.5 1.5 1.5-4.5z" fill="#9d9d9d"/><circle cx="10.5" cy="10.3" r="5.6" fill="none" stroke="#9d9d9d" stroke-width="2.6" stroke-dasharray="7 4.7"/></svg><div class="btn" style="left:421px;top:509px;width:21px;height:20px;background:#555"></div><svg style="left:421px;top:509px;" width="20" height="20" viewBox="0 0 20 20"><rect x="5" y="4" width="4" height="12" fill="#9d9d9d"/><rect x="12" y="4" width="4" height="12" fill="#9d9d9d"/></svg><div class="t" style="left:455px;top:511px;font-size:15px;color:#c6c6c6">A:</div><div class="btn" style="left:470px;top:509px;width:41px;height:20px;"></div><div style="left:471px;top:510px;width:39px;height:18px;overflow:hidden"><div class="t" style="left:3px;top:1px;font-size:15px;color:#c6c6c6;letter-spacing:-.5px">Glow2</div></div><div class="btn" style="left:511px;top:509px;width:21px;height:20px;background:#3d3d3d"></div><svg style="left:511px;top:509px;" width="20" height="20" viewBox="0 0 20 20"><path d="M7 5h11l-5 5h-11z" fill="#d6d6d6"/><path d="M3.5 11.5l-1.5 2h11l5-5h-2l-3.2 3z" fill="#bdbdbd"/></svg><div class="btn" style="left:533px;top:509px;width:42px;height:20px;"></div><div class="t" style="left:537px;top:511px;font-size:15px;color:#c6c6c6">-</div><div style="left:573px;top:510px;width:2px;height:18px;background:#3b5a86"></div><div class="t" style="left:575px;top:511px;font-size:15px;color:#c6c6c6">B:</div><div class="btn" style="left:589px;top:509px;width:40px;height:20px;background:#525252"></div><div style="left:590px;top:510px;width:38px;height:18px;overflow:hidden"><div class="t" style="left:3px;top:1px;font-size:15px;color:#1c1c1c;letter-spacing:-.5px">Color</div></div><div style="left:34px;top:531px;width:20px;height:20px;background:#858585;border:1px solid #9a9a9a"></div><svg style="left:34px;top:531px;" width="20" height="20" viewBox="0 0 20 20"><path d="M1.5 18.5L18.5 1.5v17z" fill="#4d4d4d"/><path d="M3.5 5.5h4M5.5 3.5v4" stroke="#3a3a3a" stroke-width="1.2"/><path d="M11.5 14.5h5" stroke="#b5b5b5" stroke-width="1.4"/></svg><div class="spin" style="left:56px;top:531px;width:48px;height:20px;"></div><div class="t" style="left:59px;top:533px;font-size:15px;color:#c6c6c6">0.0</div><div style="left:105px;top:535px;width:150px;height:1px;background:#8a8a8a"></div><div style="left:124px;top:531px;width:1.5px;height:8px;background:#b5b5b5"></div><div class="t" style="left:114px;top:541.5px;font-size:11px;color:#6e6e6e;width:21px;text-align:center">-5</div><div style="left:180px;top:531px;width:1.5px;height:8px;background:#b5b5b5"></div><div class="t" style="left:170px;top:541.5px;font-size:11px;color:#c4c4c4;width:21px;text-align:center">0</div><div style="left:236px;top:531px;width:1.5px;height:8px;background:#b5b5b5"></div><div class="t" style="left:226px;top:541.5px;font-size:11px;color:#6e6e6e;width:21px;text-align:center">5</div><div style="left:175px;top:530px;width:10.5px;height:10.5px;background:#54817a;border-radius:50%;border:1px solid #16211f"></div><div class="btn" style="left:256px;top:531px;width:21px;height:20px;background:#555"></div><svg style="left:256px;top:531px;" width="20" height="20" viewBox="0 0 20 20"><circle cx="10.5" cy="10" r="7.6" fill="#b9b9b9"/><path d="M10.5 4a6 6 0 0 0 0 12z" fill="#111"/></svg><div class="btn" style="left:278px;top:531px;width:21px;height:20px;background:#555"></div><div class="t" style="left:282px;top:532px;font-size:18px;font-weight:bold;color:#9d9d9d">Y</div><div class="spin" style="left:300px;top:531px;width:48px;height:20px;"></div><div class="t" style="left:303px;top:533px;font-size:15px;color:#c6c6c6">1.0</div><div style="left:350px;top:535px;width:148px;height:1px;background:#8a8a8a"></div><div style="left:355px;top:531px;width:2px;height:8px;background:#e0e0e0"></div><div class="t" style="left:346px;top:541.5px;font-size:11px;color:#c4c4c4;width:21px;text-align:center">0</div><div style="left:385px;top:530px;width:10.5px;height:10.5px;background:#54817a;border-radius:50%;border:1px solid #16211f"></div><div class="btn" style="left:500px;top:531px;width:56px;height:20px;"></div><div class="t" style="left:504px;top:533px;font-size:15px;color:#c6c6c6;letter-spacing:-.6px">sRGB</div><svg style="left:544px;top:531px;" width="10" height="20" viewBox="0 0 10 20"><path d="M2 6.5h6.4l-3.2 5z" fill="#dedede"/></svg><div style="left:557px;top:531px;width:21px;height:20px;border:1px solid #151515;border-radius:4px;background-color:#3c3c3c;background-image:linear-gradient(45deg,#2b2b2b 25%,transparent 25%,transparent 75%,#2b2b2b 75%),linear-gradient(45deg,#2b2b2b 25%,transparent 25%,transparent 75%,#2b2b2b 75%);background-size:6px 6px;background-position:0 0,3px 3px"></div><div class="btnd" style="left:607px;top:531px;width:21px;height:20px;"></div><svg style="left:607px;top:531px;" width="20" height="20" viewBox="0 0 20 20"><path d="M4 16.5l7-7.5 2 2-7.5 7z" fill="#a6a6a6"/><path d="M10 7l5 5" stroke="#a6a6a6" stroke-width="2"/><circle cx="14.5" cy="6" r="3" fill="#a6a6a6"/></svg><div style="left:32px;top:552px;width:598px;height:302px;background:#000"></div><svg preserveAspectRatio="none" style="left:83px;top:569px;" width="496" height="279" viewBox="0 0 495 278">
<defs>
<linearGradient id="pn" x1="0" y1="0" x2="1" y2="1"><stop offset="0" stop-color="#2d4674"/><stop offset=".55" stop-color="#3f5c8e"/><stop offset="1" stop-color="#2e4978"/></linearGradient>
<linearGradient id="sky" x1="0" y1="0" x2="0" y2="1"><stop offset="0" stop-color="#0a1430"/><stop offset="1" stop-color="#142850"/></linearGradient>
<linearGradient id="rt" x1="0" y1="0" x2="1" y2="0"><stop offset="0" stop-color="#1f3a6c"/><stop offset=".5" stop-color="#2a4a80"/><stop offset="1" stop-color="#284678"/></linearGradient>
<linearGradient id="pil" x1="0" y1="0" x2="0" y2="1"><stop offset="0" stop-color="#5f80b8"/><stop offset="1" stop-color="#8aa6d6"/></linearGradient>
<filter id="c1" x="-20%" y="-20%" width="140%" height="140%"><feGaussianBlur stdDeviation=".8"/></filter>
<radialGradient id="vig" cx=".5" cy=".5" r=".75"><stop offset=".45" stop-color="#000" stop-opacity="0"/><stop offset="1" stop-color="#000018" stop-opacity=".6"/></radialGradient>
<filter id="desat" x="0" y="0" width="100%" height="100%"><feColorMatrix type="saturate" values=".78"/></filter>
<filter id="c6" x="-50%" y="-50%" width="200%" height="200%"><feGaussianBlur stdDeviation="6"/></filter>
<filter id="c3" x="-40%" y="-40%" width="180%" height="180%"><feGaussianBlur stdDeviation="3"/></filter>
</defs>
<g id="studio" filter="url(#desat)">
<rect width="495" height="278" fill="#10214a"/>
<rect width="495" height="30" fill="url(#sky)"/>
<g filter="url(#c1)">
<rect x="0" y="30" width="225" height="210" fill="#102250"/>
<rect x="1" y="31" width="41" height="65" fill="url(#pn)"/><rect x="1" y="101" width="41" height="65" fill="url(#pn)"/><rect x="1" y="170" width="41" height="65" fill="url(#pn)"/><rect x="46" y="31" width="66" height="65" fill="url(#pn)"/><rect x="46" y="101" width="66" height="65" fill="url(#pn)"/><rect x="46" y="170" width="66" height="65" fill="url(#pn)"/><rect x="115" y="31" width="66" height="65" fill="url(#pn)"/><rect x="115" y="101" width="66" height="65" fill="url(#pn)"/><rect x="115" y="170" width="66" height="65" fill="url(#pn)"/><rect x="185" y="31" width="37" height="65" fill="url(#pn)"/><rect x="185" y="101" width="37" height="65" fill="url(#pn)"/><rect x="185" y="170" width="37" height="65" fill="url(#pn)"/>
<rect x="222" y="22" width="273" height="222" fill="url(#rt)"/>
<rect x="222" y="10" width="273" height="14" fill="#1b3260"/>
<rect x="215" y="14" width="280" height="5" fill="#6c86b8" opacity=".8"/>
<rect x="340" y="23" width="33" height="49" fill="url(#pil)"/>
<rect x="340" y="194" width="33" height="50" fill="url(#pil)"/>
<rect x="254" y="72" width="212" height="122" fill="#26447a"/>
<rect x="262" y="81" width="193" height="103" fill="#000"/>
<rect x="472" y="33" width="22" height="207" fill="#34538a"/>
<rect x="472" y="96" width="22" height="4" fill="#13265a"/><rect x="472" y="166" width="22" height="4" fill="#13265a"/>
<rect x="0" y="238" width="495" height="22" fill="#223f74"/>
<rect x="300" y="246" width="195" height="11" fill="#3d5d96"/>
<rect x="0" y="257" width="495" height="21" fill="#0a1738"/>
</g>
<g filter="url(#c3)" opacity=".8">
<circle cx="15" cy="8" r="4" fill="#6a7fa8"/><circle cx="102" cy="8" r="4" fill="#6a7fa8"/><circle cx="188" cy="8" r="4" fill="#6a7fa8"/>
<circle cx="275" cy="8" r="4" fill="#6a7fa8"/><circle cx="361" cy="8" r="4" fill="#6a7fa8"/><circle cx="448" cy="8" r="4" fill="#6a7fa8"/>
</g>
<rect x="113" y="120" width="4" height="10" fill="#3fd0c0" filter="url(#c1)"/>
<rect x="44" y="112" width="3" height="22" fill="#9ab4d8" filter="url(#c1)"/>
<rect x="88" y="97" width="14" height="3" fill="#4ab8e0" filter="url(#c1)" opacity=".8"/><rect x="124" y="97" width="11" height="3" fill="#e8f0fa" filter="url(#c1)" opacity=".9"/><rect x="142" y="97" width="15" height="3" fill="#4ab8e0" filter="url(#c1)" opacity=".8"/><rect x="112.5" y="78" width="3.5" height="16" fill="#8aa8e0" filter="url(#c1)" opacity=".8"/><rect x="43.5" y="80" width="3" height="12" fill="#7a98d0" filter="url(#c1)" opacity=".7"/>
<rect width="495" height="278" fill="url(#vig)"/>
</g>
<ellipse cx="215" cy="108" rx="46" ry="52" fill="#e8f040" opacity=".45" filter="url(#c6)"/>
<ellipse cx="210.5" cy="256" rx="158" ry="26" fill="#ffffff" opacity=".22" filter="url(#c3)"/>
<use href="#pbody"/><use href="#ptable"/>
<ellipse cx="210.5" cy="250" rx="146" ry="16" fill="#ffffff" opacity=".75" filter="url(#c1)"/>
<use href="#pobj"/>
<ellipse cx="214.5" cy="107" rx="40" ry="47" fill="url(#yel)"/>
<rect x=".5" y=".5" width="494" height="277" fill="none" stroke="#8f8f8f" stroke-width="1"/>
</svg><div class="t" style="left:579px;top:832px;font-size:14.5px;color:#d6d6d6">HD</div><div style="left:32px;top:854px;width:598px;height:19px;background:#000"></div><div style="left:32px;top:853px;width:598px;height:1px;background:#2b2b2b"></div><div class="t" style="left:33px;top:858px;font-size:12px;color:#dcdcdc;">A: Color.RGBA32f</div><div class="t" style="left:184px;top:858px;font-size:12px;color:#dcdcdc;">HD 1920x1080</div><div class="t" style="left:442px;top:858px;font-size:12px;color:#dcdcdc;">RoD: 0 0 1920 1080</div><div style="left:32px;top:873px;width:598px;height:50px;background:#2c2c2c"></div><div style="left:32px;top:878px;width:7.5px;height:45px;background:#000"></div><div style="left:33px;top:901px;width:596px;height:1px;background:#959595"></div><div style="left:39.0px;top:896px;width:1.2px;height:5px;background:#b5b5b5"></div><div class="t" style="left:14.5px;top:906px;font-size:14.2px;color:#c4c4c4;width:50px;text-align:center">0</div><div style="left:99.0px;top:896px;width:1.2px;height:5px;background:#b5b5b5"></div><div class="t" style="left:74.5px;top:906px;font-size:14.2px;color:#727272;width:50px;text-align:center">50</div><div style="left:159.0px;top:896px;width:1.2px;height:5px;background:#b5b5b5"></div><div class="t" style="left:134.5px;top:906px;font-size:14.2px;color:#c4c4c4;width:50px;text-align:center">100</div><div style="left:219.0px;top:896px;width:1.2px;height:5px;background:#b5b5b5"></div><div class="t" style="left:194.5px;top:906px;font-size:14.2px;color:#727272;width:50px;text-align:center">150</div><div style="left:279.0px;top:896px;width:1.2px;height:5px;background:#b5b5b5"></div><div class="t" style="left:254.5px;top:906px;font-size:14.2px;color:#c4c4c4;width:50px;text-align:center">200</div><div style="left:339.0px;top:896px;width:1.2px;height:5px;background:#b5b5b5"></div><div class="t" style="left:314.5px;top:906px;font-size:14.2px;color:#727272;width:50px;text-align:center">250</div><div style="left:399.0px;top:896px;width:1.2px;height:5px;background:#b5b5b5"></div><div class="t" style="left:374.5px;top:906px;font-size:14.2px;color:#c4c4c4;width:50px;text-align:center">300</div><div style="left:459.0px;top:896px;width:1.2px;height:5px;background:#b5b5b5"></div><div class="t" style="left:434.5px;top:906px;font-size:14.2px;color:#727272;width:50px;text-align:center">350</div><div style="left:519.0px;top:896px;width:1.2px;height:5px;background:#b5b5b5"></div><div class="t" style="left:494.5px;top:906px;font-size:14.2px;color:#c4c4c4;width:50px;text-align:center">400</div><div style="left:579.0px;top:896px;width:1.2px;height:5px;background:#b5b5b5"></div><div class="t" style="left:554.5px;top:906px;font-size:14.2px;color:#727272;width:50px;text-align:center">450</div><div class="t" style="left:37px;top:874.5px;font-size:15px;color:#d24a16">0</div><svg style="left:39px;top:892px;" width="9" height="9" viewBox="0 0 9 9"><path d="M0 0v9h8z" fill="#e5591a"/></svg><div class="t" style="left:297px;top:874.5px;font-size:14.5px;color:#f59b1e;font-style:italic;width:30px;text-align:center">227</div><svg style="left:305px;top:892px;" width="14" height="9" viewBox="0 0 14 9"><path d="M0 0h14l-7 9z" fill="#f7941d"/></svg><div style="left:298px;top:901px;width:2px;height:2px;background:#ddd"></div><div style="left:32px;top:873px;width:598px;height:5px;background:#272727"></div><div style="left:33.5px;top:923.5px;width:21px;height:20.5px;background:#484848;border:1px solid #1c1c1c;border-radius:4px"></div><svg style="left:33.5px;top:923px;" width="21" height="21" viewBox="0 0 20 21"><path d="M4 3.5L16 17H4z" fill="#0a0a0a"/><path d="M17 4v3" stroke="#999" stroke-width="1"/></svg><div style="left:56px;top:923px;width:26px;height:21px;background:#4a4a4a"></div><div class="t" style="left:56px;top:926px;font-size:15px;color:#c8c8c8;width:26px;text-align:center">0</div><div style="left:82px;top:927px;width:13px;height:12px;background:#555"></div><div class="t" style="left:109px;top:926px;font-size:15px;color:#c8c8c8">fps:</div><div style="left:133.5px;top:923px;width:28.5px;height:21px;background:#484848;border:1px solid #222;overflow:hidden"><div class="t" style="left:2px;top:2px;font-size:15px;color:#161616">59.9</div></div><div style="left:162px;top:923px;width:26.5px;height:21px;background:#484848;border:1px solid #1c1c1c;border-radius:4px;overflow:hidden"><div class="t" style="left:3px;top:2px;font-size:15px;color:#c8c8c8">TF</div></div><svg style="left:179px;top:923px;" width="10" height="21" viewBox="0 0 10 21"><path d="M1 5h7l-3.5 5.5z" fill="#e6e6e6"/></svg><div style="left:189px;top:923.5px;width:20.5px;height:20.5px;background:#484848;border:1px solid #1c1c1c;border-radius:4px"></div><svg style="left:189px;top:923px;" width="20.5" height="21" viewBox="0 0 20 21"><circle cx="10" cy="10.5" r="7.2" fill="none" stroke="#7d7d7d" stroke-width="2"/><circle cx="10" cy="10.5" r="1.6" fill="#7d7d7d"/><path d="M10 3v3M10 15v3M2.5 10.5h3M14.5 10.5h3" stroke="#7d7d7d" stroke-width="1.4"/></svg><div style="left:211px;top:923.5px;width:20.5px;height:20.5px;background:#484848;border:1px solid #1c1c1c;border-radius:4px"></div><svg style="left:211px;top:923px;" width="20.5" height="21" viewBox="0 0 20 21"><path d="M3 6h12v3h-12z" fill="#c8181c"/><path d="M15 4.5l3.5 3-3.5 3z" fill="#c8181c"/><path d="M2 10h16v6h-16z" fill="#1a1a1a"/><path d="M4 15h12" stroke="#ddd" stroke-width="1.6" stroke-dasharray="1.6 1.6"/></svg><div style="left:243px;top:923.5px;width:20.5px;height:20.5px;background:#484848;border:1px solid #1c1c1c;border-radius:4px"></div><svg style="left:243px;top:923px;" width="20.5" height="21" viewBox="0 0 20 21"><rect x="4.5" y="9.5" width="11" height="8" rx="1" fill="#0a0a0a"/><path d="M6.7 9.5v-2.7a3.3 3.3 0 0 1 6.6 0v2.7" fill="none" stroke="#0a0a0a" stroke-width="2.2"/><circle cx="10" cy="13" r="1.2" fill="#555"/></svg><div style="left:265px;top:923.5px;width:20.5px;height:20.5px;background:#484848;border:1px solid #1c1c1c;border-radius:4px"></div><svg style="left:265px;top:923px;" width="20.5" height="21" viewBox="0 0 20 21"><rect x="3.5" y="4" width="3" height="13" fill="#0a0a0a"/><path d="M17 4v13l-10-6.5z" fill="#0a0a0a"/></svg><div style="left:287px;top:923.5px;width:20px;height:20.5px;background:#484848;border:1px solid #1c1c1c;border-radius:4px"></div><svg style="left:287px;top:923px;" width="20" height="21" viewBox="0 0 20 21"><path d="M15 4v13l-10.5-6.5z" fill="#0a0a0a"/></svg><div style="left:308.5px;top:923px;width:27.5px;height:21px;background:#4a4a4a;border:1px solid #2a2a2a"></div><div class="t" style="left:308.5px;top:926px;font-size:15px;color:#c8c8c8;width:27.5px;text-align:center">227</div><div style="left:336px;top:923.5px;width:20px;height:20.5px;background:#484848;border:1px solid #1c1c1c;border-radius:4px"></div><svg style="left:336px;top:923px;" width="20" height="21" viewBox="0 0 20 21"><path d="M5 4v13l10.5-6.5z" fill="#0a0a0a"/></svg><div style="left:358px;top:923.5px;width:20.5px;height:20.5px;background:#484848;border:1px solid #1c1c1c;border-radius:4px"></div><svg style="left:358px;top:923px;" width="20.5" height="21" viewBox="0 0 20 21"><rect x="13.5" y="4" width="3" height="13" fill="#0a0a0a"/><path d="M3 4v13l10-6.5z" fill="#0a0a0a"/></svg><div style="left:389.5px;top:923.5px;width:20.5px;height:20.5px;background:#484848;border:1px solid #1c1c1c;border-radius:4px"></div><svg style="left:389.5px;top:923px;" width="20.5" height="21" viewBox="0 0 20 21"><rect x="13" y="4" width="3.4" height="13" fill="#0a0a0a"/><path d="M12 4v13l-9.5-6.5z" fill="#0a0a0a"/></svg><div style="left:412px;top:923.5px;width:20.5px;height:20.5px;background:#484848;border:1px solid #1c1c1c;border-radius:4px"></div><svg style="left:412px;top:923px;" width="20.5" height="21" viewBox="0 0 20 21"><rect x="3.6" y="4" width="3.4" height="13" fill="#0a0a0a"/><path d="M8 4v13l9.5-6.5z" fill="#0a0a0a"/></svg><div style="left:443.5px;top:923.5px;width:20.5px;height:20.5px;background:#484848;border:1px solid #1c1c1c;border-radius:4px"></div><svg style="left:443.5px;top:923px;" width="20.5" height="21" viewBox="0 0 20 21"><path d="M7 5l-5 5.5 5 5.5 5-5.5z" fill="none" stroke="#9a9a9a" stroke-width="1.5"/><path d="M17.5 4v13l-9.5-6.5z" fill="#0a0a0a"/></svg><div style="left:466px;top:923.5px;width:20.5px;height:20.5px;background:#484848;border:1px solid #1c1c1c;border-radius:4px"></div><svg style="left:466px;top:923px;" width="20.5" height="21" viewBox="0 0 20 21"><path d="M13 5l5 5.5-5 5.5-5-5.5z" fill="none" stroke="#9a9a9a" stroke-width="1.5"/><path d="M2.5 4v13l9.5-6.5z" fill="#0a0a0a"/></svg><div style="left:497.5px;top:923.5px;width:20.5px;height:20.5px;background:#484848;border:1px solid #1c1c1c;border-radius:4px"></div><svg style="left:497.5px;top:923px;" width="20.5" height="21" viewBox="0 0 20 21"><path d="M10.5 4v13l-8-6.5zM17.5 4v13l-8-6.5z" fill="#0a0a0a"/></svg><div style="left:519.5px;top:923px;width:28px;height:21px;background:#4a4a4a;border:1px solid #2a2a2a"></div><div class="t" style="left:519.5px;top:926px;font-size:15px;color:#c8c8c8;width:28px;text-align:center">10</div><div style="left:548px;top:923.5px;width:20.5px;height:20.5px;background:#484848;border:1px solid #1c1c1c;border-radius:4px"></div><svg style="left:548px;top:923px;" width="20.5" height="21" viewBox="0 0 20 21"><path d="M2.5 4v13l8-6.5zM9.5 4v13l8-6.5z" fill="#0a0a0a"/></svg><div style="left:579.5px;top:923px;width:34px;height:21px;background:#4a4a4a;border:1px solid #2a2a2a;border-radius:3px 0 0 3px"></div><div class="t" style="left:579.5px;top:926px;font-size:15px;color:#c8c8c8;width:34px;text-align:center">585</div><div style="left:613px;top:923px;width:14.5px;height:21px;background:#484848;border:1px solid #1c1c1c;border-radius:0 4px 4px 0"></div><svg style="left:613px;top:923px;" width="14" height="21" viewBox="0 0 14 21"><path d="M12 4v13h-10z" fill="#0a0a0a"/></svg><div style="left:32px;top:946px;width:598px;height:2px;background:#262626"></div><div style="left:32px;top:948px;width:598px;height:28px;background:#202020"></div><svg style="left:34px;top:957px;" width="14" height="14" viewBox="0 0 14 14"><rect x="0" y="0" width="13" height="13" rx="2" fill="#5b6066" stroke="#222" stroke-width="1"/><rect x="1" y="1" width="6" height="6" fill="#c9c9c9"/></svg><div style="left:58.5px;top:954px;width:94px;height:22px;background:#323232;border:1px solid #161616;border-bottom:none;border-radius:5px 5px 0 0"></div><div class="t" style="left:61.5px;top:956px;font-size:15px;color:#c6c6c6">Properties</div><svg style="left:132.5px;top:957px;" width="16" height="16" viewBox="0 0 16 16"><circle cx="8" cy="8" r="7.5" fill="#666"/><path d="M4 4l8 8M12 4l-8 8" stroke="#c4c4c4" stroke-width="1.25"/></svg><div style="left:154px;top:954px;width:99px;height:22px;background:#2a2a2a;border:1px solid #161616;border-bottom:none;border-radius:5px 5px 0 0"></div><div class="t" style="left:157px;top:956px;font-size:15px;color:#c6c6c6;letter-spacing:-.2px">Dope Sheet</div><svg style="left:233px;top:957px;" width="16" height="16" viewBox="0 0 16 16"><circle cx="8" cy="8" r="7.5" fill="#666"/><path d="M4 4l8 8M12 4l-8 8" stroke="#c4c4c4" stroke-width="1.25"/></svg><div style="left:255.5px;top:954px;width:107.5px;height:22px;background:#2a2a2a;border:1px solid #161616;border-bottom:none;border-radius:5px 5px 0 0"></div><div class="t" style="left:258.5px;top:956px;font-size:15px;color:#c6c6c6">Curve Editor</div><svg style="left:343.0px;top:957px;" width="16" height="16" viewBox="0 0 16 16"><circle cx="8" cy="8" r="7.5" fill="#666"/><path d="M4 4l8 8M12 4l-8 8" stroke="#c4c4c4" stroke-width="1.25"/></svg><div style="left:600px;top:957px;width:13px;height:14px;background:#2a2a2a;border:1px solid #111;border-radius:2px"><div style="left:1px;top:1px;width:9px;height:9px;border:1.5px solid #8a8a8a;border-top-width:3px"></div></div><div style="left:615px;top:957px;width:13px;height:14px;background:#3a3a3a;border:1px solid #111;border-radius:2px"></div><svg style="left:615px;top:957px;" width="13" height="14" viewBox="0 0 13 14"><path d="M3.5 4l6 6M9.5 4l-6 6" stroke="#111" stroke-width="1.7"/></svg><div style="left:33.5px;top:980px;width:34px;height:19px;background:#474747;border:1px solid #222"></div><div class="t" style="left:38px;top:984px;font-size:15px;color:#cfcfcf">1</div><div style="left:73px;top:981px;width:15px;height:14px;background:#555;border:1px solid #1a1a1a;border-radius:2px"></div><svg style="left:73px;top:981px;" width="15" height="14" viewBox="0 0 15 14"><path d="M4 3.500000l7 7M11 3.500000l-7 7" stroke="#eee" stroke-width="2"/></svg><div style="left:93px;top:981px;width:14px;height:14px;background:#2a2a2a;border:1px solid #111;border-radius:2px"></div><div style="left:96px;top:984px;width:8px;height:8px;border:1.5px solid #bbb;border-top-width:2.5px"></div><div style="left:33px;top:999.5px;width:596px;height:29px;background:#3a3a3a;border:1px solid #0c0c0c;border-width:2px 1px 2px 1px"></div><div style="left:33px;top:1028.5px;width:1px;height:52px;background:#6a6a6a"></div><div style="left:628px;top:1028.5px;width:1px;height:52px;background:#6a6a6a"></div><div style="left:33px;top:1029.5px;width:596px;height:1px;background:#4a4a4a"></div><div style="left:37px;top:1003px;width:20px;height:20px;background:#3a3a3a;border:1px solid #161616;border-radius:3px"></div><svg style="left:37px;top:1003px;" width="20" height="20" viewBox="0 0 20 20"><rect x="2.5" y="3.5" width="15" height="14" fill="#707070"/><rect x="2.5" y="3.5" width="15" height="3" fill="#b4b4b4"/><path d="M4 4.8h11" stroke="#222" stroke-width=".8"/></svg><div style="left:61px;top:1003px;width:20px;height:20px;background:#565656;border:1px solid #161616;border-radius:3px"></div><svg style="left:61px;top:1003px;" width="20" height="20" viewBox="0 0 20 20"><circle cx="10" cy="10" r="5.5" fill="none" stroke="#9d9d9d" stroke-width="4" stroke-dasharray="2.6 1.7"/><circle cx="10" cy="10" r="4.5" fill="none" stroke="#9d9d9d" stroke-width="2"/></svg><div style="left:84.5px;top:1003px;width:20px;height:20px;background:#565656;border:1px solid #161616;border-radius:3px"></div><svg style="left:84.5px;top:1003px;" width="20" height="20" viewBox="0 0 20 20"><circle cx="10" cy="10" r="7" fill="none" stroke="#9d9d9d" stroke-width="1.6"/><path d="M6 10h8M10 6v8" stroke="#9d9d9d" stroke-width="1.8"/></svg><div style="left:108.5px;top:1003px;width:126px;height:20px;background:#575757;border:1px solid #2a2a2a"></div><div class="t" style="left:111px;top:1005px;font-size:15px;color:#d4d4d4">SpillMap</div><div style="left:326px;top:1003px;width:20px;height:20px;background:#02ab02;border:1.5px solid #1a3a1a;border-radius:2px"></div><div style="left:350px;top:1003px;width:20px;height:20px;background:#474747;border:1px solid #161616;border-radius:3px"></div><svg style="left:350px;top:1003px;" width="20" height="20" viewBox="0 0 20 20"><path d="M14 4.5l-8 5.5 8 5.5" fill="none" stroke="#0c0c0c" stroke-width="2.2"/></svg><div style="left:373.5px;top:1003px;width:20px;height:20px;background:#474747;border:1px solid #161616;border-radius:3px"></div><svg style="left:373.5px;top:1003px;" width="20" height="20" viewBox="0 0 20 20"><path d="M6 4.5l8 5.5-8 5.5" fill="none" stroke="#8a8a8a" stroke-width="2.2"/></svg><div style="left:397.5px;top:1003px;width:20px;height:20px;background:#474747;border:1px solid #161616;border-radius:3px"></div><svg style="left:397.5px;top:1003px;" width="20" height="20" viewBox="0 0 20 20"><path d="M4 4h13v12h-5M8 16h-4v-7" fill="none" stroke="#0c0c0c" stroke-width="1.8"/><path d="M6 9l3.5 5 5-7" fill="none" stroke="#0c0c0c" stroke-width="1.8"/></svg><div style="left:508.5px;top:1003px;width:20px;height:20px;background:#474747;border:1px solid #161616;border-radius:3px"></div><div class="t" style="left:513px;top:1003.5px;font-size:19px;color:#0c0c0c;font-weight:bold;transform:scaleX(.85)">?</div><div style="left:533px;top:1003px;width:20px;height:20px;background:#474747;border:1px solid #161616;border-radius:3px"></div><svg style="left:533px;top:1003px;" width="20" height="20" viewBox="0 0 20 20"><path d="M4 9h12v8h-12z" fill="#ddd"/><path d="M10 1l2 3 3-1-1 3 3 2-3.5 1h-7l-3.5-1 3-2-1-3 3 1z" fill="#0c0c0c"/></svg><div style="left:556.5px;top:1003px;width:20px;height:20px;background:#474747;border:1px solid #161616;border-radius:3px"></div><svg style="left:556.5px;top:1003px;" width="20" height="20" viewBox="0 0 20 20"><path d="M3 16.5h14" stroke="#0c0c0c" stroke-width="2.6"/></svg><div style="left:580.5px;top:1003px;width:20px;height:20px;background:#474747;border:1px solid #161616;border-radius:3px"></div><svg style="left:580.5px;top:1003px;" width="20" height="20" viewBox="0 0 20 20"><rect x="3.5" y="4" width="13" height="12" fill="none" stroke="#0c0c0c" stroke-width="2"/><path d="M3 5h14" stroke="#0c0c0c" stroke-width="3"/></svg><div style="left:604px;top:1003px;width:20px;height:20px;background:#474747;border:1px solid #161616;border-radius:3px"></div><svg style="left:604px;top:1003px;" width="20" height="20" viewBox="0 0 20 20"><path d="M5 5l10 10M15 5l-10 10" stroke="#0c0c0c" stroke-width="2.4"/></svg><div style="left:629px;top:24px;width:2.5px;height:1056px;background:#3c3c3c"></div><div style="left:631.5px;top:24px;width:1289px;height:28px;background:#202020"></div><div style="left:631.5px;top:52px;width:1289px;height:1028px;background:#323232"></div><div style="left:632px;top:52px;width:1286px;height:1px;background:#9a9a9a"></div><div style="left:632px;top:52px;width:1px;height:1028px;background:#8a8a8a"></div><div style="left:1917px;top:52px;width:1px;height:1028px;background:#9a9a9a"></div><div style="left:633px;top:1078px;width:1285px;height:1px;background:#7a7a7a"></div><div style="left:776px;top:257px;width:458.5px;height:523.5px;background:#02ab02;border:1px solid #0a3a0a"></div><div style="left:777px;top:297px;width:457px;height:1px;background:#0a4a0a"></div><div class="t" style="left:974.5px;top:268.5px;font-size:16px;color:rgba(0,40,0,.85);transform:scaleX(.985)">SpillMap</div><svg style="left:0;top:0" width="1920" height="1080" viewBox="0 0 1920 1080"><line x1="975" y1="228" x2="890.1" y2="304.6" stroke="#050505" stroke-width="1.2" opacity=".62"/><path d="M883.0 311.0L892.3 297.4L897.5 303.2z" fill="#050505" opacity=".62"/><line x1="1015.8" y1="228" x2="1011.5" y2="302.9" stroke="#050505" stroke-width="1.2" opacity=".62"/><path d="M1011.0 312.5L1008.0 296.3L1015.8 296.7z" fill="#050505" opacity=".62"/><line x1="1059" y1="228" x2="1142.0" y2="307.1" stroke="#050505" stroke-width="1.2" opacity=".62"/><path d="M1149.0 313.7L1134.7 305.5L1140.1 299.8z" fill="#050505" opacity=".62"/><line x1="1018" y1="116" x2="1018.0" y2="140.4" stroke="#050505" stroke-width="1.2" opacity=".62"/><path d="M1018.0 150.0L1014.1 134.0L1021.9 134.0z" fill="#050505" opacity=".62"/><line x1="1082" y1="189" x2="1413.4" y2="189.0" stroke="#050505" stroke-width="1.6"/><path d="M1423.0 189.0L1407.0 192.9L1407.0 185.1z" fill="#050505"/><line x1="917" y1="327.5" x2="1114" y2="327.5" stroke="#050505" stroke-width="2"/><line x1="1218" y1="327.5" x2="1281.9" y2="327.5" stroke="#050505" stroke-width="2.4"/><path d="M1291.5 327.5L1275.5 331.4L1275.5 323.6z" fill="#050505"/><line x1="1305" y1="328.2" x2="1458.9" y2="329.0" stroke="#050505" stroke-width="1.6"/><path d="M1468.5 329.0L1452.5 332.8L1452.5 325.0z" fill="#050505"/><line x1="865" y1="343" x2="865.0" y2="357.9" stroke="#050505" stroke-width="2"/><path d="M865.0 367.5L861.1 351.5L868.9 351.5z" fill="#050505"/><line x1="1164" y1="345" x2="1164.0" y2="378.9" stroke="#050505" stroke-width="2"/><path d="M1164.0 388.5L1160.1 372.5L1167.9 372.5z" fill="#050505"/><line x1="1157" y1="395.5" x2="927.6" y2="395.5" stroke="#050505" stroke-width="1.2" opacity=".62"/><path d="M918.0 395.5L934.0 391.6L934.0 399.4z" fill="#050505" opacity=".62"/><line x1="1164" y1="403" x2="1164.0" y2="422.1" stroke="#050505" stroke-width="1.2" opacity=".62"/><path d="M1164.0 431.7L1160.1 415.7L1167.9 415.7z" fill="#050505" opacity=".62"/><line x1="865" y1="422" x2="865.0" y2="441.9" stroke="#050505" stroke-width="2"/><path d="M865.0 451.5L861.1 435.5L868.9 435.5z" fill="#050505"/><line x1="873" y1="458.5" x2="1104.1" y2="458.5" stroke="#050505" stroke-width="1.2" opacity=".62"/><path d="M1113.7 458.5L1097.7 462.4L1097.7 454.6z" fill="#050505" opacity=".62"/><line x1="865" y1="466" x2="865.0" y2="521.9" stroke="#050505" stroke-width="1.2" opacity=".62"/><path d="M865.0 531.5L861.1 515.5L868.9 515.5z" fill="#050505" opacity=".62"/><line x1="1010" y1="344" x2="1010.0" y2="633.4" stroke="#050505" stroke-width="1.6"/><path d="M1010.0 643.0L1006.1 627.0L1013.9 627.0z" fill="#050505"/><line x1="1165" y1="486" x2="1165.4" y2="531.4" stroke="#050505" stroke-width="2"/><path d="M1165.5 541.0L1161.5 525.0L1169.3 525.0z" fill="#050505"/><line x1="1159" y1="547.5" x2="927.6" y2="547.5" stroke="#050505" stroke-width="1.2" opacity=".62"/><path d="M918.0 547.5L934.0 543.6L934.0 551.4z" fill="#050505" opacity=".62"/><line x1="865" y1="563" x2="865.0" y2="612.7" stroke="#050505" stroke-width="1.2" opacity=".62"/><path d="M865.0 622.3L861.1 606.3L868.9 606.3z" fill="#050505" opacity=".62"/><line x1="1003" y1="650" x2="927.6" y2="650.0" stroke="#050505" stroke-width="1.2" opacity=".62"/><path d="M918.0 650.0L934.0 646.1L934.0 653.9z" fill="#050505" opacity=".62"/><line x1="1010" y1="657" x2="1010.0" y2="684.4" stroke="#050505" stroke-width="1.2" opacity=".62"/><path d="M1010.0 694.0L1006.1 678.0L1013.9 678.0z" fill="#050505" opacity=".62"/><line x1="865" y1="677" x2="865.0" y2="695.7" stroke="#050505" stroke-width="2"/><path d="M865.0 705.3L861.1 689.3L868.9 689.3z" fill="#050505"/><line x1="918" y1="721" x2="947.4" y2="721.0" stroke="#050505" stroke-width="1.2" opacity=".62"/><path d="M957.0 721.0L941.0 724.9L941.0 717.1z" fill="#050505" opacity=".62"/><line x1="1062" y1="721" x2="1236.4" y2="721.0" stroke="#050505" stroke-width="1.2" opacity=".62"/><path d="M1246.0 721.0L1230.0 724.9L1230.0 717.1z" fill="#050505" opacity=".62"/><line x1="1298.5" y1="335" x2="1298.5" y2="695.7" stroke="#050505" stroke-width="1.2" opacity=".62"/><path d="M1298.5 705.3L1294.6 689.3L1302.4 689.3z" fill="#050505" opacity=".62"/><line x1="1350.6" y1="722" x2="1413.4" y2="722.0" stroke="#050505" stroke-width="1.2" opacity=".62"/><path d="M1423.0 722.0L1407.0 725.9L1407.0 718.1z" fill="#050505" opacity=".62"/><line x1="1423" y1="299" x2="1379.6" y2="299.0" stroke="#050505" stroke-width="1.6"/><path d="M1370.0 299.0L1386.0 295.1L1386.0 302.9z" fill="#050505"/><line x1="1363" y1="306" x2="1364.0" y2="974.4" stroke="#050505" stroke-width="2"/><path d="M1364.0 984.0L1360.1 968.0L1367.9 968.0z" fill="#050505"/><line x1="1372" y1="991.5" x2="1413.4" y2="991.5" stroke="#050505" stroke-width="1.6" stroke-dasharray="7 5"/><path d="M1423.0 991.5L1407.0 995.4L1407.0 987.6z" fill="#050505"/><line x1="1475" y1="205" x2="1475.0" y2="273.7" stroke="#050505" stroke-width="1.6"/><path d="M1475.0 283.3L1471.1 267.3L1478.9 267.3z" fill="#050505"/><line x1="1475" y1="315" x2="1475" y2="322" stroke="#050505" stroke-width="1.4"/><line x1="1475.4" y1="337" x2="1475.4" y2="699.1" stroke="#050505" stroke-width="1.4"/><path d="M1475.4 708.7L1471.5 692.7L1479.3 692.7z" fill="#050505"/><line x1="1475" y1="740" x2="1475" y2="747" stroke="#050505" stroke-width="1.4"/><line x1="1475" y1="800.6" x2="1475.0" y2="820.7" stroke="#050505" stroke-width="1.6"/><path d="M1475.0 830.3L1471.1 814.3L1478.9 814.3z" fill="#050505"/><line x1="1475" y1="862" x2="1475.0" y2="894.7" stroke="#050505" stroke-width="1.6"/><path d="M1475.0 904.3L1471.1 888.3L1478.9 888.3z" fill="#050505"/><line x1="1475" y1="936.3" x2="1475.0" y2="966.4" stroke="#050505" stroke-width="1.6"/><path d="M1475.0 976.0L1471.1 960.0L1478.9 960.0z" fill="#050505"/><line x1="1527" y1="920" x2="1560.0" y2="920.0" stroke="#050505" stroke-width="1.2" opacity=".62"/><path d="M1569.6 920.0L1553.6 923.9L1553.6 916.1z" fill="#050505" opacity=".62"/><line x1="1621.5" y1="700" x2="1621.5" y2="716.0" stroke="#050505" stroke-width="1.6"/><path d="M1621.5 725.6L1617.6 709.6L1625.4 709.6z" fill="#050505"/><line x1="1621.5" y1="757" x2="1621.5" y2="766.4" stroke="#050505" stroke-width="1.6"/><path d="M1621.5 776.0L1617.6 760.0L1625.4 760.0z" fill="#050505"/><line x1="1718" y1="753" x2="1682.5" y2="772.0" stroke="#050505" stroke-width="1.2" opacity=".62"/><path d="M1674.0 776.5L1686.3 765.5L1690.0 772.4z" fill="#050505" opacity=".62"/><line x1="1621.5" y1="830" x2="1621.5" y2="836.6" stroke="#050505" stroke-width="1.6"/><path d="M1621.5 842.0L1617.6 833.0L1625.4 833.0z" fill="#050505"/><line x1="1621.5" y1="873" x2="1621.5" y2="883.7" stroke="#050505" stroke-width="1.6"/><path d="M1621.5 893.3L1617.6 877.3L1625.4 877.3z" fill="#050505"/><line x1="1621.5" y1="948" x2="1621.5" y2="967.4" stroke="#050505" stroke-width="1.6"/><path d="M1621.5 977.0L1617.6 961.0L1625.4 961.0z" fill="#050505"/><line x1="1569.6" y1="992" x2="1536.6" y2="992.0" stroke="#050505" stroke-width="1.2" opacity=".62"/><path d="M1527.0 992.0L1543.0 988.1L1543.0 995.9z" fill="#050505" opacity=".62"/><line x1="954" y1="189" x2="929.8" y2="189.0" stroke="#f2f2f2" stroke-width="1.8"/><path d="M922.0 189.0L935.0 184.8L935.0 193.2z" fill="#f2f2f2"/><line x1="787" y1="189" x2="802.0" y2="189.0" stroke="#f2f2f2" stroke-width="1.6" stroke-dasharray="5 3"/><path d="M808.0 189.0L798.0 192.4L798.0 185.6z" fill="#f2f2f2"/><line x1="1216" y1="779.5" x2="1233.5" y2="762" stroke="#0a5a0a" stroke-width="1"/><path d="M1075 940h24M1087 928v24" stroke="#e8e8e8" stroke-width="1.6"/></svg><div style="left:813px;top:311px;width:104.5px;height:32.5px;background:#383838;border:1px solid #000"></div><div style="left:837.5px;top:311px;width:80.0px;height:32.5px;background:#a33c6b;border:1px solid #000"></div><svg style="left:813px;top:311px;" width="24.5" height="32.5" viewBox="0 0 24 32.5"><rect x="3" y="4.0" width="5" height="5" fill="#c0403c"/><path d="M10.5 4.0l3.5 2.5-3.5 2.5z" fill="#7d7d7d"/><rect x="16.5" y="4.5" width="4.5" height="4.5" fill="none" stroke="#c0403c" stroke-width="1"/><rect x="3" y="11.5" width="5" height="5" fill="#4caf50"/><path d="M10.5 11.5l3.5 2.5-3.5 2.5z" fill="#7d7d7d"/><rect x="16.5" y="12.0" width="4.5" height="4.5" fill="none" stroke="#4caf50" stroke-width="1"/><rect x="3" y="19.0" width="5" height="5" fill="#3b46c8"/><path d="M10.5 19.0l3.5 2.5-3.5 2.5z" fill="#7d7d7d"/><rect x="16.5" y="19.5" width="4.5" height="4.5" fill="none" stroke="#3b46c8" stroke-width="1"/></svg><div class="nt" style="left:777.5px;top:317.25px;width:200.0px;color:#2a0618;font-size:16px"><span style="display:inline-block;transform:scaleX(0.828)">RED</span></div><div style="left:957.5px;top:312.3px;width:104.5px;height:32.5px;background:#383838;border:1px solid #000"></div><div style="left:982.0px;top:312.3px;width:80.0px;height:32.5px;background:#a33c6b;border:1px solid #000"></div><svg style="left:957.5px;top:312.3px;" width="24.5" height="32.5" viewBox="0 0 24 32.5"><rect x="3" y="4.0" width="5" height="5" fill="#c0403c"/><path d="M10.5 4.0l3.5 2.5-3.5 2.5z" fill="#7d7d7d"/><rect x="16.5" y="4.5" width="4.5" height="4.5" fill="none" stroke="#c0403c" stroke-width="1"/><rect x="3" y="11.5" width="5" height="5" fill="#4caf50"/><path d="M10.5 11.5l3.5 2.5-3.5 2.5z" fill="#7d7d7d"/><rect x="16.5" y="12.0" width="4.5" height="4.5" fill="none" stroke="#4caf50" stroke-width="1"/><rect x="3" y="19.0" width="5" height="5" fill="#3b46c8"/><path d="M10.5 19.0l3.5 2.5-3.5 2.5z" fill="#7d7d7d"/><rect x="16.5" y="19.5" width="4.5" height="4.5" fill="none" stroke="#3b46c8" stroke-width="1"/></svg><div class="nt" style="left:922.0px;top:318.55px;width:200.0px;color:#2a0618;font-size:16px"><span style="display:inline-block;transform:scaleX(0.847)">GREEN</span></div><div style="left:1113.7px;top:313.5px;width:104.5px;height:32.5px;background:#383838;border:1px solid #000"></div><div style="left:1138.2px;top:313.5px;width:80.0px;height:32.5px;background:#a33c6b;border:1px solid #000"></div><svg style="left:1113.7px;top:313.5px;" width="24.5" height="32.5" viewBox="0 0 24 32.5"><rect x="3" y="4.0" width="5" height="5" fill="#c0403c"/><path d="M10.5 4.0l3.5 2.5-3.5 2.5z" fill="#7d7d7d"/><rect x="16.5" y="4.5" width="4.5" height="4.5" fill="none" stroke="#c0403c" stroke-width="1"/><rect x="3" y="11.5" width="5" height="5" fill="#4caf50"/><path d="M10.5 11.5l3.5 2.5-3.5 2.5z" fill="#7d7d7d"/><rect x="16.5" y="12.0" width="4.5" height="4.5" fill="none" stroke="#4caf50" stroke-width="1"/><rect x="3" y="19.0" width="5" height="5" fill="#3b46c8"/><path d="M10.5 19.0l3.5 2.5-3.5 2.5z" fill="#7d7d7d"/><rect x="16.5" y="19.5" width="4.5" height="4.5" fill="none" stroke="#3b46c8" stroke-width="1"/></svg><div class="nt" style="left:1078.2px;top:319.75px;width:200.0px;color:#2a0618;font-size:16px"><span style="display:inline-block;transform:scaleX(0.885)">BLUE</span></div><div style="left:813px;top:367.5px;width:104.5px;height:55px;background:#383838;border:1px solid #000"></div><div style="left:837.5px;top:367.5px;width:80.0px;height:55px;background:#ff66ff;border:1px solid #000"></div><svg style="left:813px;top:367.5px;" width="24.5" height="55" viewBox="0 0 24 55"><path d="M9.5 13.5h10.5l-5.5 8.5h-10.5z" fill="#1f7fc0"/><path d="M9.5 10.7h10.5l-5.5 8.5h-10.5z" fill="#2f2f2f"/><path d="M9.5 8.5h10.5l-5.5 8.5h-10.5z" fill="#e6e6e2"/><circle cx="12" cy="40" r="8" fill="#7c7c7c" stroke="#c9c9c9" stroke-width="1.5"/><path d="M8 40m0-3l8 8m0-8l-8 8" stroke="#e0e0e0" stroke-width="1.8" fill="none"/><path d="M8 40m0-5.500000h8" stroke="#e0e0e0" stroke-width="1.6"/></svg><div class="nt" style="left:777.5px;top:375.5px;width:200.0px;color:#3a0a3a;font-size:16px"><span style="display:inline-block;transform:scaleX(0.919)">R/G</span><br><span style="display:inline-block;transform:scaleX(0.985)">(average)</span></div><div style="left:1113.7px;top:431.5px;width:104.5px;height:55px;background:#383838;border:1px solid #000"></div><div style="left:1138.2px;top:431.5px;width:80.0px;height:55px;background:#ff66ff;border:1px solid #000"></div><svg style="left:1113.7px;top:431.5px;" width="24.5" height="55" viewBox="0 0 24 55"><path d="M9.5 13.5h10.5l-5.5 8.5h-10.5z" fill="#1f7fc0"/><path d="M9.5 10.7h10.5l-5.5 8.5h-10.5z" fill="#2f2f2f"/><path d="M9.5 8.5h10.5l-5.5 8.5h-10.5z" fill="#e6e6e2"/><circle cx="12" cy="40" r="8" fill="#e0e0e0" stroke="#f4f4f4" stroke-width="1.5"/><path d="M10 40m0-4l4 4-4 4" stroke="#555" stroke-width="2.4" fill="none"/></svg><div class="nt" style="left:1078.2px;top:439.5px;width:200.0px;color:#3a0a3a;font-size:16px"><span style="display:inline-block;transform:scaleX(0.919)">R/G</span><br>(max)</div><div style="left:813px;top:531.3px;width:104.5px;height:32px;background:#383838;border:1px solid #000"></div><div style="left:837.5px;top:531.3px;width:80.0px;height:32px;background:#b5f3ff;border:1px solid #000"></div><svg style="left:813px;top:531.3px;" width="24.5" height="32" viewBox="0 0 24 32"><rect x="4" y="12" width="8" height="4" fill="#ddd"/><rect x="7" y="8" width="1.6" height="17" fill="#ddd"/><path d="M17 7h2l-.5 17h-1z" fill="#999"/></svg><div class="nt" style="left:777.5px;top:537.3px;width:200.0px;color:#0a1a20;font-size:16px"><span style="display:inline-block;transform:scaleX(0.951)">Dissolve1</span></div><div style="left:813px;top:622.3px;width:104.5px;height:55px;background:#383838;border:1px solid #000"></div><div style="left:837.5px;top:622.3px;width:80.0px;height:55px;background:#4b10f5;border:1px solid #000"></div><svg style="left:813px;top:622.3px;" width="24.5" height="55" viewBox="0 0 24 55"><path d="M9.5 13.5h10.5l-5.5 8.5h-10.5z" fill="#1f7fc0"/><path d="M9.5 10.7h10.5l-5.5 8.5h-10.5z" fill="#2f2f2f"/><path d="M9.5 8.5h10.5l-5.5 8.5h-10.5z" fill="#e6e6e2"/><circle cx="12" cy="40" r="8" fill="#8c8c8c" stroke="#151515" stroke-width="1.5"/><path d="M7 40h10" stroke="#1a1a1a" stroke-width="2.2"/></svg><div class="nt" style="left:777.5px;top:630.3px;width:200.0px;color:#1a0a7a;font-size:16px"><span style="display:inline-block;transform:scaleX(0.933)">G-avg</span><br><span style="display:inline-block;transform:scaleX(1.010)">(from)</span></div><div style="left:813px;top:705.3px;width:104.5px;height:32px;background:#383838;border:1px solid #000"></div><div style="left:837.5px;top:705.3px;width:80.0px;height:32px;background:#7aa7fa;border:1px solid #000"></div><svg style="left:813px;top:705.3px;" width="24.5" height="32" viewBox="0 0 24 32"><path d="M8 9h-3.500000v14h3.500000M16 9h3.500000v14h-3.500000" fill="none" stroke="#e6e6e6" stroke-width="2"/></svg><div class="nt" style="left:777.5px;top:711.3px;width:200.0px;color:#0a1a4a;font-size:16px"><span style="display:inline-block;transform:scaleX(0.980)">Clamp2</span></div><div style="left:957.2px;top:694px;width:105px;height:55px;background:#383838;border:1px solid #000"></div><div style="left:981.7px;top:694px;width:80.5px;height:55px;background:#4b10f5;border:1px solid #000"></div><svg style="left:957.2px;top:694px;" width="24.5" height="55" viewBox="0 0 24 55"><path d="M9.5 13.5h10.5l-5.5 8.5h-10.5z" fill="#1f7fc0"/><path d="M9.5 10.7h10.5l-5.5 8.5h-10.5z" fill="#2f2f2f"/><path d="M9.5 8.5h10.5l-5.5 8.5h-10.5z" fill="#e6e6e2"/><circle cx="12" cy="40" r="8" fill="#8c8c8c" stroke="#151515" stroke-width="1.5"/><path d="M7 40h10" stroke="#1a1a1a" stroke-width="2.2"/></svg><div class="nt" style="left:921.7px;top:702.0px;width:200.5px;color:#1a0a7a;font-size:16px"><span style="display:inline-block;transform:scaleX(0.869)">G-Sp</span><br><span style="display:inline-block;transform:scaleX(1.010)">(from)</span></div><div style="left:954px;top:150px;width:128.7px;height:78px;background:#383838;border:1px solid #000"></div><div style="left:979px;top:150px;width:103.7px;height:78px;background:#b9b9b9;border:1px solid #000"></div><svg style="left:954px;top:150px;" width="25" height="78" viewBox="0 0 25 78"><circle cx="12" cy="39" r="8.6" fill="none" stroke="#e0e0e0" stroke-width="1.6"/><path d="M9.500000 34.500000v9l7-4.500000z" fill="#e0e0e0"/></svg><svg preserveAspectRatio="none" style="left:998px;top:153px;" width="64" height="36" viewBox="0 0 495 279"><rect width="495" height="279" fill="#48cc50"/><ellipse cx="378" cy="142" rx="55" ry="78" fill="#35c541" opacity=".8"/><use href="#pbody"/><ellipse cx="214.5" cy="108" rx="24" ry="32" fill="#6e4526"/><use href="#ptable"/><use href="#pobj"/></svg><div class="nt" style="left:979px;top:193px;width:103.7px;line-height:19px;color:rgba(0,0,0,.88);font-size:16px"><span style="display:inline-block;transform:scaleX(0.939)">Read1</span><br><span style="display:inline-block;transform:scaleX(0.950)">(GetUp-</span></div><div class="nt" style="left:960px;top:231px;width:140px;line-height:19px;color:rgba(0,0,0,.88);font-size:16px">GetMoving.mp4)</div><div style="left:808px;top:170px;width:113.5px;height:39.5px;background:#fff"></div><div style="left:811.5px;top:173.5px;width:106.5px;height:32.5px;background:#383838;border:1px solid #000"></div><div style="left:836.0px;top:173.5px;width:82.0px;height:32.5px;background:#b9b9b9;border:1px solid #000"></div><svg style="left:811.5px;top:173.5px;" width="24.5" height="32.5" viewBox="0 0 24 32.5"><path d="M3 15.500000000000002q9-9 18 0q-9 9-18 0z" fill="none" stroke="#d8d8d8" stroke-width="1.8"/><circle cx="12" cy="15.5" r="3.6" fill="#d8d8d8"/></svg><div class="nt" style="left:776.0px;top:179.75px;width:202.0px;font-size:16px"><span style="display:inline-block;transform:scaleX(0.926)">Original</span></div><div style="left:1423px;top:173px;width:104.5px;height:32.3px;background:#383838;border:1px solid #000"></div><div style="left:1447.5px;top:173px;width:80.0px;height:32.3px;background:#0bf512;border:1px solid #000"></div><svg style="left:1423px;top:173px;" width="24.5" height="32.3" viewBox="0 0 24 32.3"><path d="M4 24l9-9.5 2.5 2.5-9.5 9z" fill="#3f9c40" stroke="#1b3d1b" stroke-width=".8"/><path d="M12 11.5l5.5 5.5" stroke="#2f7a30" stroke-width="2.2"/><circle cx="17" cy="10" r="3.6" fill="#3f9c40" stroke="#1b3d1b" stroke-width=".8"/></svg><div class="nt" style="left:1387.5px;top:179.15px;width:200.0px;color:#0b4a0b;font-size:16px"><span style="display:inline-block;transform:scaleX(0.942)">CKeyer</span></div><div style="left:1423px;top:283.3px;width:104.5px;height:32px;background:#383838;border:1px solid #000"></div><div style="left:1447.5px;top:283.3px;width:80.0px;height:32px;background:#cf8350;border:1px solid #000"></div><svg style="left:1423px;top:283.3px;" width="24.5" height="32" viewBox="0 0 24 32"><rect x="2.5" y="5" width="12" height="21" fill="#f1f1f1"/><path d="M15 9.5v12l-4.5-2-3.5-4 3.5-4z" fill="#1a1a1a"/><path d="M8 15.5h5" stroke="#f1f1f1" stroke-width="1"/></svg><div class="nt" style="left:1387.5px;top:289.3px;width:200.0px;color:#1f0f05;font-size:16px"><span style="display:inline-block;transform:scaleX(0.948)">Erode1</span></div><div style="left:1246px;top:705.3px;width:104.6px;height:31.5px;background:#383838;border:1px solid #000"></div><div style="left:1270.5px;top:705.3px;width:80.1px;height:31.5px;background:#a33c6b;border:1px solid #000"></div><svg style="left:1246px;top:705.3px;" width="24.5" height="31.5" viewBox="0 0 24 31.5"><rect x="3" y="4.0" width="5" height="5" fill="#c0403c"/><path d="M10.5 4.0l3.5 2.5-3.5 2.5z" fill="#7d7d7d"/><rect x="16.5" y="4.5" width="4.5" height="4.5" fill="none" stroke="#c0403c" stroke-width="1"/><rect x="3" y="11.5" width="5" height="5" fill="#4caf50"/><path d="M10.5 11.5l3.5 2.5-3.5 2.5z" fill="#7d7d7d"/><rect x="16.5" y="12.0" width="4.5" height="4.5" fill="none" stroke="#4caf50" stroke-width="1"/><rect x="3" y="19.0" width="5" height="5" fill="#3b46c8"/><path d="M10.5 19.0l3.5 2.5-3.5 2.5z" fill="#7d7d7d"/><rect x="16.5" y="19.5" width="4.5" height="4.5" fill="none" stroke="#3b46c8" stroke-width="1"/></svg><div class="nt" style="left:1210.5px;top:711.05px;width:200.1px;color:#2a0618;font-size:16px"><span style="display:inline-block;transform:scaleX(0.961)">Combine 1</span></div><div style="left:1423px;top:708.7px;width:104.5px;height:32px;background:#383838;border:1px solid #000"></div><div style="left:1447.5px;top:708.7px;width:80.0px;height:32px;background:#a33c6b;border:1px solid #000"></div><svg style="left:1423px;top:708.7px;" width="24.5" height="32" viewBox="0 0 24 32"><rect x="3" y="4.0" width="5" height="5" fill="#c0403c"/><path d="M10.5 4.0l3.5 2.5-3.5 2.5z" fill="#7d7d7d"/><rect x="16.5" y="4.5" width="4.5" height="4.5" fill="none" stroke="#c0403c" stroke-width="1"/><rect x="3" y="11.5" width="5" height="5" fill="#4caf50"/><path d="M10.5 11.5l3.5 2.5-3.5 2.5z" fill="#7d7d7d"/><rect x="16.5" y="12.0" width="4.5" height="4.5" fill="none" stroke="#4caf50" stroke-width="1"/><rect x="3" y="19.0" width="5" height="5" fill="#3b46c8"/><path d="M10.5 19.0l3.5 2.5-3.5 2.5z" fill="#7d7d7d"/><rect x="16.5" y="19.5" width="4.5" height="4.5" fill="none" stroke="#3b46c8" stroke-width="1"/></svg><div class="nt" style="left:1387.5px;top:714.7px;width:200.0px;color:#2a0618;font-size:16px"><span style="display:inline-block;transform:scaleX(0.977)">Combine 2</span></div><div style="left:1423px;top:746px;width:104.5px;height:55px;background:#383838;border:1px solid #000"></div><div style="left:1447.5px;top:746px;width:80.0px;height:55px;background:#4f5fd0;border:1px solid #000"></div><svg style="left:1423px;top:746px;" width="24.5" height="55" viewBox="0 0 24 55"><path d="M9.5 13.5h10.5l-5.5 8.5h-10.5z" fill="#1f7fc0"/><path d="M9.5 10.7h10.5l-5.5 8.5h-10.5z" fill="#2f2f2f"/><path d="M9.5 8.5h10.5l-5.5 8.5h-10.5z" fill="#e6e6e2"/><circle cx="12" cy="40" r="9" fill="#787878"/></svg><div class="nt" style="left:1387.5px;top:754.0px;width:200.0px;color:#0b1140;font-size:16px">Merge2<br><span style="display:inline-block;transform:scaleX(0.961)">(mask)</span></div><div class="t" style="left:1428.2px;top:777px;font-size:16px;font-weight:bold;color:#fff;transform:scaleX(.92)">M</div><div style="left:1423px;top:830.3px;width:104.5px;height:32px;background:#383838;border:1px solid #000"></div><div style="left:1447.5px;top:830.3px;width:80.0px;height:32px;background:#4f5fd0;border:1px solid #000"></div><svg style="left:1423px;top:830.3px;" width="24.5" height="32" viewBox="0 0 24 32"><path d="M4 6l7 7M11 6l-7 7" stroke="#fff" stroke-width="2.4"/></svg><div class="nt" style="left:1387.5px;top:836.3px;width:200.0px;color:#0b1140;font-size:16px"><span style="display:inline-block;transform:scaleX(0.977)">Premult1</span></div><div class="t" style="left:1433px;top:839px;font-size:17px;color:#bdbdbd">α</div><div style="left:1423px;top:904.3px;width:104.5px;height:32px;background:#383838;border:1px solid #000"></div><div style="left:1447.5px;top:904.3px;width:80.0px;height:32px;background:#7aa6ff;border:1px solid #000"></div><svg style="left:1423px;top:904.3px;" width="24.5" height="32" viewBox="0 0 24 32"><g fill="none" stroke-width="1.8" stroke-dasharray="1.5 1.1"><circle cx="13" cy="11" r="3.5" stroke="#c05aa0"/><circle cx="7" cy="20" r="3.5" stroke="#5ab060"/><circle cx="19" cy="20" r="3.5" stroke="#5a78c8"/></g></svg><div class="nt" style="left:1386.5px;top:910.3px;width:200.0px;color:#05070f;font-size:16px"><span style="display:inline-block;transform:scaleX(0.995)">ColorCorrect1</span></div><div style="left:1423px;top:976px;width:104.5px;height:31.5px;background:#383838;border:1px solid #000"></div><div style="left:1447.5px;top:976px;width:80.0px;height:31.5px;background:#b9b9b9;border:1px solid #000"></div><svg style="left:1423px;top:976px;" width="24.5" height="31.5" viewBox="0 0 24 31.5"><path d="M3 15.500000000000002q9-9 18 0q-9 9-18 0z" fill="none" stroke="#d8d8d8" stroke-width="1.8"/><circle cx="12" cy="15.5" r="3.6" fill="#d8d8d8"/></svg><div class="nt" style="left:1387.5px;top:981.75px;width:200.0px;font-size:16px"><span style="display:inline-block;transform:scaleX(0.913)">Processed</span></div><div style="left:1557.5px;top:622.5px;width:128.3px;height:78px;background:#383838;border:1px solid #000"></div><div style="left:1582.5px;top:622.5px;width:103.3px;height:78px;background:#b9b9b9;border:1px solid #000"></div><svg style="left:1557.5px;top:622.5px;" width="25" height="78" viewBox="0 0 25 78"><circle cx="12" cy="39" r="8.6" fill="none" stroke="#e0e0e0" stroke-width="1.6"/><path d="M9.5 34.5v9l7-4.5z" fill="#e0e0e0"/></svg><svg preserveAspectRatio="none" style="left:1602px;top:625px;" width="64" height="36" viewBox="0 0 495 278"><use href="#studio"/></svg><div class="nt" style="left:1582.5px;top:664.5px;width:103.3px;line-height:19px;color:rgba(0,0,0,.88);font-size:16px"><span style="display:inline-block;transform:scaleX(0.939)">Read2</span></div><div class="nt" style="left:1553px;top:683.5px;width:160px;line-height:19px;color:rgba(0,0,0,.88);font-size:16px"><span style="display:inline-block;transform:scaleX(0.980)">(tv-studio-set2.png)</span></div><div style="left:1569.7px;top:725.6px;width:104px;height:31.5px;background:#383838;border:1px solid #000"></div><div style="left:1594.2px;top:725.6px;width:79.5px;height:31.5px;background:#7aa6ff;border:1px solid #000"></div><svg style="left:1569.7px;top:725.6px;" width="24.5" height="31.5" viewBox="0 0 24 31.5"><g fill="none" stroke-width="1.8" stroke-dasharray="1.5 1.1"><circle cx="13" cy="11" r="3.5" stroke="#c05aa0"/><circle cx="7" cy="20" r="3.5" stroke="#5ab060"/><circle cx="19" cy="20" r="3.5" stroke="#5a78c8"/></g></svg><div class="nt" style="left:1533.2px;top:731.35px;width:199.5px;color:#05070f;font-size:16px"><span style="display:inline-block;transform:scaleX(0.995)">ColorCorrect2</span></div><div style="left:1695.6px;top:722px;width:104.2px;height:31.5px;background:#383838;border:1px solid #000"></div><div style="left:1720.1px;top:722px;width:79.7px;height:31.5px;background:#4b8a32;border:1px solid #000"></div><svg style="left:1695.6px;top:722px;" width="24.5" height="31.5" viewBox="0 0 24 31.5"><defs><linearGradient id="rmp" x1="0" y1="0" x2="1" y2="0"><stop offset="0" stop-color="#e4e4e4"/><stop offset="1" stop-color="#1a1a1a"/></linearGradient></defs><rect x="3" y="6" width="19" height="20" fill="url(#rmp)"/></svg><div class="nt" style="left:1660.1px;top:727.75px;width:199.7px;color:#0c1f06;font-size:16px"><span style="display:inline-block;transform:scaleX(0.950)">Ramp1</span></div><div style="left:1569.7px;top:776px;width:104px;height:54.5px;background:#383838;border:1px solid #000"></div><div style="left:1594.2px;top:776px;width:79.5px;height:54.5px;background:#4f5fd0;border:1px solid #000"></div><svg style="left:1569.7px;top:776px;" width="24.5" height="54.5" viewBox="0 0 24 54.5"><path d="M9.5 13.5h10.5l-5.5 8.5h-10.5z" fill="#1f7fc0"/><path d="M9.5 10.7h10.5l-5.5 8.5h-10.5z" fill="#2f2f2f"/><path d="M9.5 8.5h10.5l-5.5 8.5h-10.5z" fill="#e6e6e2"/><circle cx="12" cy="40" r="8" fill="#b5b5b5" stroke="#111" stroke-width="1.5"/><path d="M8.5 40m0-3.5l7 7m0-7l-7 7" stroke="#111" stroke-width="2.2" fill="none"/></svg><div class="nt" style="left:1534.2px;top:783.75px;width:199.5px;color:#0b1140;font-size:16px">Merge4<br><span style="display:inline-block;transform:scaleX(1.020)">(multiply)</span></div><div style="left:1569.7px;top:841.8px;width:104px;height:31.5px;background:#383838;border:1px solid #000"></div><div style="left:1594.2px;top:841.8px;width:79.5px;height:31.5px;background:#cf8350;border:1px solid #000"></div><svg style="left:1569.7px;top:841.8px;" width="24.5" height="31.5" viewBox="0 0 24 31.5"><path d="M16 8c1 4 4 8 4 12a4.5 5 0 0 1-9 0c0-4 4-8 5-12z" fill="#a9a9a9"/><path d="M16 12c.5 3 2.5 6 2.5 8.5a2.5 3 0 0 1-3 2z" fill="#d6d6d6"/></svg><div class="nt" style="left:1534.2px;top:847.55px;width:199.5px;color:#1f0f05;font-size:16px"><span style="display:inline-block;transform:scaleX(0.976)">Blur1</span></div><div style="left:1569.7px;top:893.3px;width:104px;height:55px;background:#383838;border:1px solid #000"></div><div style="left:1594.2px;top:893.3px;width:79.5px;height:55px;background:#4f5fd0;border:1px solid #000"></div><svg style="left:1569.7px;top:893.3px;" width="24.5" height="55" viewBox="0 0 24 55"><path d="M9.5 13.5h10.5l-5.5 8.5h-10.5z" fill="#1f7fc0"/><path d="M9.5 10.7h10.5l-5.5 8.5h-10.5z" fill="#2f2f2f"/><path d="M9.5 8.5h10.5l-5.5 8.5h-10.5z" fill="#e6e6e2"/><circle cx="12" cy="40" r="8.5" fill="#050505"/></svg><div class="nt" style="left:1534.2px;top:901.3px;width:199.5px;color:#0b1140;font-size:16px"><span style="display:inline-block;transform:scaleX(0.976)">Merge1</span><br><span style="display:inline-block;transform:scaleX(1.010)">(over)</span></div><div class="t" style="left:1575.5px;top:923px;font-size:20px;color:#fff">α</div><div style="left:1569.7px;top:977px;width:104px;height:32px;background:#383838;border:1px solid #000"></div><div style="left:1594.2px;top:977px;width:79.5px;height:32px;background:#cf8350;border:1px solid #000"></div><svg style="left:1569.7px;top:977px;" width="24.5" height="32" viewBox="0 0 24 32"><circle cx="12" cy="16" r="6.5" fill="#e4e4e4" stroke="#a0a0a0" stroke-width="2.4" stroke-dasharray="1.6 1.4"/><circle cx="12" cy="16" r="4" fill="#fff"/></svg><div class="nt" style="left:1534.2px;top:983.0px;width:199.5px;color:#1f0f05;font-size:16px"><span style="display:inline-block;transform:scaleX(0.976)">Glow2</span></div><svg style="left:0;top:0" width="1920" height="1080" viewBox="0 0 1920 1080"><circle cx="1164" cy="395.7" r="7" fill="#bdbdbd" stroke="#1a1a1a" stroke-width="1"/><circle cx="865.7" cy="458.7" r="7" fill="#bdbdbd" stroke="#1a1a1a" stroke-width="1"/><circle cx="1166" cy="548" r="7" fill="#bdbdbd" stroke="#1a1a1a" stroke-width="1"/><circle cx="1010.4" cy="650" r="7" fill="#bdbdbd" stroke="#1a1a1a" stroke-width="1"/><circle cx="1362.6" cy="298.7" r="7" fill="#bdbdbd" stroke="#1a1a1a" stroke-width="1"/><circle cx="1298.6" cy="327.5" r="7" fill="#bdbdbd" stroke="#1a1a1a" stroke-width="1"/><circle cx="1475.4" cy="329.2" r="7" fill="#bdbdbd" stroke="#1a1a1a" stroke-width="1"/><circle cx="1364.4" cy="991.5" r="7" fill="#bdbdbd" stroke="#1a1a1a" stroke-width="1"/></svg><div class="lb" style="left:1037px;top:124px;color:#c9c9c9;font-size:15.5px;transform:translate(-50%,-50%) scaleX(.93)">Sync</div><div class="lb" style="left:792.5px;top:179px;color:#c9c9c9;font-size:15px;transform:translate(-50%,-50%) scaleX(.93)">2</div><div class="lb" style="left:933px;top:183px;color:rgba(208,208,208,.45);font-size:14px;transform:translate(-50%,-50%) scaleX(.93)">1</div><div class="lb" style="left:1269px;top:188px;color:#c9c9c9;font-size:15px;transform:translate(-50%,-50%) scaleX(.93)">Source</div><div class="lb" style="left:1492px;top:243px;color:#c9c9c9;font-size:15px;transform:translate(-50%,-50%) scaleX(.93)">Source</div><div class="lb" style="left:929px;top:268.5px;color:#c9f0c9;font-size:15px;transform:translate(-50%,-50%) scaleX(.93)">B</div><div class="lb" style="left:1013px;top:268.5px;color:#c9f0c9;font-size:15px;transform:translate(-50%,-50%) scaleX(.93)">B</div><div class="lb" style="left:1104px;top:269.5px;color:#c9f0c9;font-size:15px;transform:translate(-50%,-50%) scaleX(.93)">B</div><div class="lb" style="left:1036px;top:394px;color:#c9f0c9;font-size:15px;transform:translate(-50%,-50%) scaleX(.93)">B</div><div class="lb" style="left:1164px;top:385px;color:#c9f0c9;font-size:13px;transform:translate(-50%,-50%) scaleX(.93)">B</div><div class="lb" style="left:993px;top:457.5px;color:#c9f0c9;font-size:15px;transform:translate(-50%,-50%) scaleX(.93)">A</div><div class="lb" style="left:863px;top:475.5px;color:#b7ee9a;font-size:15px;transform:translate(-50%,-50%) scaleX(.93)">1</div><div class="lb" style="left:1009px;top:517.5px;color:#c9f0c9;font-size:15px;transform:translate(-50%,-50%) scaleX(.93)">B</div><div class="lb" style="left:1037px;top:547px;color:#c9f0c9;font-size:15px;transform:translate(-50%,-50%) scaleX(.93)">0</div><div class="lb" style="left:865px;top:592px;color:#c9f0c9;font-size:15px;transform:translate(-50%,-50%) scaleX(.93)">A</div><div class="lb" style="left:960px;top:649px;color:#c9f0c9;font-size:15px;transform:translate(-50%,-50%) scaleX(.93)">B</div><div class="lb" style="left:937px;top:720px;color:#c9f0c9;font-size:15px;transform:translate(-50%,-50%) scaleX(.93)">A</div><div class="lb" style="left:1154px;top:720px;color:#c9f0c9;font-size:15px;transform:translate(-50%,-50%) scaleX(.93)">A</div><div class="lb" style="left:1298px;top:518.5px;color:#c9c9c9;font-size:15px;transform:translate(-50%,-50%) scaleX(.93)">B</div><div class="lb" style="left:1385px;top:721px;color:#c9c9c9;font-size:15px;transform:translate(-50%,-50%) scaleX(.93)">B</div><div class="lb" style="left:1475px;top:522px;color:#c9c9c9;font-size:14px;transform:translate(-50%,-50%) scaleX(.93)">A</div><div class="lb" style="left:1475px;top:530px;color:#c9c9c9;font-size:14px;transform:translate(-50%,-50%) scaleX(.93)">A</div><div class="lb" style="left:1548px;top:918.5px;color:#c9c9c9;font-size:15px;transform:translate(-50%,-50%) scaleX(.93)">A</div><div class="lb" style="left:1694px;top:763.5px;color:#c9c9c9;font-size:15px;transform:translate(-50%,-50%) scaleX(.93)">A</div><div class="lb" style="left:1474px;top:954.5px;color:#e8e8c8;font-size:15px;transform:translate(-50%,-50%) scaleX(.93)">1</div><div class="lb" style="left:1395px;top:991.5px;color:#c9c9c9;font-size:15px;transform:translate(-50%,-50%) scaleX(.93)">2</div><div class="lb" style="left:1404px;top:979.5px;color:#c9c9c9;font-size:15px;transform:translate(-50%,-50%) scaleX(.93)">4</div><div class="lb" style="left:1547px;top:991px;color:#c9c9c9;font-size:15px;transform:translate(-50%,-50%) scaleX(.93)">3</div><div style="left:631px;top:24px;width:1289px;height:28px;background:#202020"></div><svg style="left:633px;top:33px;" width="14" height="14" viewBox="0 0 14 14"><rect x="0" y="0" width="13" height="13" rx="2" fill="#5b6066" stroke="#222" stroke-width="1"/><rect x="1" y="1" width="6" height="6" fill="#c9c9c9"/></svg><div style="left:658px;top:30px;width:105px;height:22px;background:#323232;border:1px solid #161616;border-bottom:none;border-radius:5px 5px 0 0"></div><div class="t" style="left:661px;top:32px;font-size:15px;color:#f0961e">Node Graph</div><svg style="left:743px;top:33px;" width="16" height="16" viewBox="0 0 16 16"><circle cx="8" cy="8" r="7.5" fill="#666"/><path d="M4 4l8 8M12 4l-8 8" stroke="#c4c4c4" stroke-width="1.25"/></svg><div style="left:1890px;top:33px;width:13px;height:14px;background:#2a2a2a;border:1px solid #111;border-radius:2px"><div style="left:1px;top:1px;width:9px;height:9px;border:1.5px solid #777;border-top-width:3px"></div></div><div style="left:1905px;top:33px;width:13px;height:14px;background:#3a3a3a;border:1px solid #111;border-radius:2px"></div><svg style="left:1905px;top:33px;" width="13" height="14" viewBox="0 0 13 14"><path d="M3.5 4l6 6M9.5 4l-6 6" stroke="#111" stroke-width="1.7"/></svg>
</body></html>
